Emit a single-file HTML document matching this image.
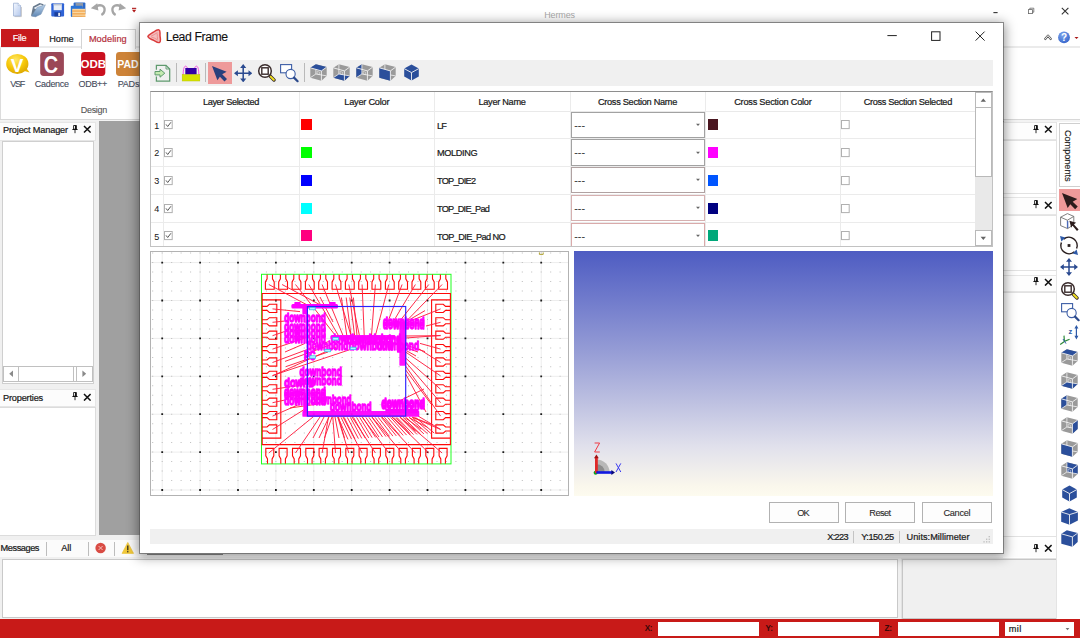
<!DOCTYPE html>
<html><head><meta charset="utf-8"><title>Hermes</title>
<style>
html,body{margin:0;padding:0;background:#fff;}
body{width:1080px;height:638px;position:relative;overflow:hidden;font-family:"Liberation Sans",sans-serif;}
body div,body svg{position:absolute;}
svg svg{position:static;}
</style></head><body>
<svg style="left:0;top:0" width="140" height="22" viewBox="0 0 140 22">
<defs><linearGradient id="gpg" x1="0" y1="0" x2="1" y2="1"><stop offset="0" stop-color="#f4f8ff"/><stop offset="1" stop-color="#b4c8ec"/></linearGradient>
<linearGradient id="gfd" x1="0" y1="0" x2="0" y2="1"><stop offset="0" stop-color="#b8d0e8"/><stop offset="1" stop-color="#5e86b4"/></linearGradient></defs>
<path d="M14.6 16.6 H21.4 V7" fill="none" stroke="#c9c9c9" stroke-width="1"/><path d="M13.5 3.2 H18.2 L20.6 5.6 V16 H13.5 Z" fill="url(#gpg)" stroke="#9fb2d4" stroke-width="0.8"/>
<path d="M18.2 3.2 V5.6 H20.6" fill="#fff" stroke="#9fb2d4" stroke-width="0.6"/>
<path d="M31 15.8 L33 6.6 L39.6 3 L43.6 4.2 L42.4 7 L36 16.4 Z" fill="#66788c"/>
<path d="M33.6 8 L40.4 4.4 L43 5.2 L36.4 9.4 Z" fill="#eef3f8"/>
<path d="M31.6 16.2 L37 7.4 L45.4 4.8 L41 14.2 L35.6 16.8 Z" fill="url(#gfd)" stroke="#7892b0" stroke-width="0.5"/>
<rect x="51.3" y="3.3" width="12.8" height="13.2" rx="1" fill="#2f63d6"/><rect x="53.6" y="3.8" width="8.2" height="6.4" fill="#e9eef6"/><rect x="53.6" y="3.8" width="8.2" height="1.6" fill="#b9c3d2"/><rect x="54.4" y="12.2" width="6.6" height="4.3" fill="#1b3f9c"/><rect x="58.2" y="12.8" width="1.9" height="3.2" fill="#e6ecf7"/>
<rect x="73.6" y="2.6" width="11.8" height="11.6" rx="1" fill="#2d69c8"/><rect x="75.6" y="3" width="7.4" height="4.6" fill="#8d98a8"/><rect x="70.8" y="5.8" width="11.8" height="11.2" rx="1" fill="#2a73d6"/><rect x="72.2" y="8.8" width="13.2" height="8" fill="#f9d6a0"/><rect x="72.2" y="10.4" width="13.2" height="1.3" fill="#f2a64e"/><rect x="72.2" y="13.2" width="13.2" height="1.3" fill="#f2a64e"/><rect x="72.2" y="15.8" width="13.2" height="1" fill="#f2a64e"/>
<path d="M96.2 6.4 C101 3.6 105 6.4 104.6 10.2 C104.4 12.6 103 14.2 101.4 15" fill="none" stroke="#a6a6a6" stroke-width="2.3"/><path d="M90.8 8.2 L97.2 3.2 L98.4 10.4 Z" fill="#a6a6a6"/>
<path d="M120.8 6.4 C116 3.6 112 6.4 112.4 10.2 C112.6 12.6 114 14.2 115.6 15" fill="none" stroke="#a6a6a6" stroke-width="2.3"/><path d="M126.2 8.2 L119.8 3.2 L118.6 10.4 Z" fill="#a6a6a6"/>
<rect x="132" y="7.8" width="4.2" height="1.1" fill="#b01818"/><path d="M132 9.8 H136.2 L134.1 12.4 Z" fill="#b01818"/>
</svg>
<div style="top:8.80px;line-height:12px;font-size:9.0px;color:#a8a8a8;white-space:nowrap;letter-spacing:-0.134px;left:559.53px;transform:translateX(-50%);">Hermes</div>
<svg style="left:985px;top:0" width="95" height="22" viewBox="985 0 95 22"><path d="M993.4 12.6 H997.6" stroke="#333" stroke-width="1.1"/><rect x="1028.4" y="9.6" width="4" height="4" fill="#fff" stroke="#666" stroke-width="0.8"/><path d="M1029.8 9.6 V8.2 H1033.8 V12.2 H1032.4" fill="none" stroke="#666" stroke-width="0.8"/><path d="M1061.8 7.8 L1068.4 14.4 M1068.4 7.8 L1061.8 14.4" stroke="#333" stroke-width="1.1"/></svg>
<div style="left:0px;top:46px;width:1080px;height:2px;background:#ebebeb"></div>
<div style="left:1px;top:29px;width:38px;height:17.5px;background:#c7191c"></div>
<div style="top:32.30px;line-height:12px;font-size:9.2px;color:#fff;white-space:nowrap;-webkit-text-stroke:0.15px #fff;letter-spacing:-0.381px;left:19.51px;transform:translateX(-50%);">File</div>
<div style="top:32.70px;line-height:12px;font-size:9.2px;color:#222;white-space:nowrap;-webkit-text-stroke:0.22px #222;letter-spacing:-0.010px;left:61.49px;transform:translateX(-50%);">Home</div>
<div style="left:81px;top:29px;width:52.5px;height:19px;background:#fff;border:1px solid #d4d4d4;border-bottom:none"></div>
<div style="top:32.70px;line-height:12px;font-size:9.2px;color:#b5323e;white-space:nowrap;-webkit-text-stroke:0.22px #b5323e;letter-spacing:0.070px;left:107.84px;transform:translateX(-50%);">Modeling</div>
<svg style="left:1040px;top:28px" width="40" height="20" viewBox="1040 28 40 20"><path d="M1045.2 39 L1048 35.6 L1050.8 39" fill="none" stroke="#5a5a5a" stroke-width="2.2" stroke-linecap="round" stroke-linejoin="round"/><path d="M1045.2 39 L1048 35.6 L1050.8 39" fill="none" stroke="#fff" stroke-width="0.9" stroke-linecap="round" stroke-linejoin="round"/>
<defs><radialGradient id="ghl" cx="0.4" cy="0.3" r="0.8"><stop offset="0" stop-color="#7ea6ee"/><stop offset="1" stop-color="#2f5fc8"/></radialGradient></defs>
<circle cx="1064" cy="37.4" r="5.9" fill="url(#ghl)"/><text x="1064" y="41" font-family="Liberation Sans" font-weight="bold" font-size="10" fill="#fff" text-anchor="middle">?</text>
<path d="M1074.5 36.9 H1078.5 L1076.5 39 Z" fill="#a81414"/></svg>
<div style="left:0px;top:48px;width:1px;height:71px;background:#dcdcdc"></div>
<svg style="left:0;top:50px" width="140" height="28" viewBox="0 50 140 28">
<defs><radialGradient id="gv" cx="0.42" cy="0.3" r="0.75"><stop offset="0" stop-color="#ffe868"/><stop offset="0.55" stop-color="#f6c708"/><stop offset="1" stop-color="#d9a300"/></radialGradient></defs>
<path d="M21 70 L29.6 72.6 L24.8 66 Z" fill="#ecb800"/><ellipse cx="17.3" cy="63.9" rx="11.1" ry="10" fill="url(#gv)"/>
<text x="10.7" y="71.6" font-family="Liberation Sans" font-weight="bold" font-size="19.2" fill="#fff" textLength="12.6" lengthAdjust="spacingAndGlyphs">V</text>
<rect x="40.2" y="52" width="23.7" height="24" rx="3.4" fill="#9b4757"/><text x="43.7" y="72.7" font-family="Liberation Sans" font-weight="bold" font-size="24.2" fill="#fff" textLength="14.3" lengthAdjust="spacingAndGlyphs">C</text>
<rect x="81.1" y="52" width="24.2" height="24" rx="3.4" fill="#ca0f1e"/>
<svg x="81.1" y="52" width="24.2" height="24" viewBox="81.1 52 24.2 24"><text x="80.5" y="68.1" font-family="Liberation Sans" font-weight="bold" font-size="10.9" fill="#fff" textLength="25.7" lengthAdjust="spacingAndGlyphs">ODB</text></svg>
<rect x="116" y="52" width="28" height="24" rx="3.4" fill="#cd8338"/><text x="117.3" y="67.9" font-family="Liberation Sans" font-weight="bold" font-size="10.5" fill="#fff">PAD</text>
</svg>
<div style="top:77.90px;line-height:12px;font-size:9.0px;color:#444a5a;white-space:nowrap;-webkit-text-stroke:0.1px #444a5a;letter-spacing:-1.301px;left:17.15px;transform:translateX(-50%);">VSF</div>
<div style="top:77.90px;line-height:12px;font-size:9.0px;color:#444a5a;white-space:nowrap;-webkit-text-stroke:0.1px #444a5a;letter-spacing:-0.332px;left:51.73px;transform:translateX(-50%);">Cadence</div>
<div style="top:77.90px;line-height:12px;font-size:9.0px;color:#444a5a;white-space:nowrap;-webkit-text-stroke:0.1px #444a5a;letter-spacing:-0.363px;left:92.72px;transform:translateX(-50%);">ODB++</div>
<div style="top:77.90px;line-height:12px;font-size:9.0px;color:#444a5a;white-space:nowrap;-webkit-text-stroke:0.1px #444a5a;letter-spacing:-0.210px;left:117.7px;">PADs</div>
<div style="top:103.90px;line-height:12px;font-size:9.0px;color:#555;white-space:nowrap;-webkit-text-stroke:0.1px #555;letter-spacing:-0.336px;left:93.83px;transform:translateX(-50%);">Design</div>
<div style="left:0px;top:119px;width:1080px;height:1px;background:#d8d8d8"></div>
<div style="left:0px;top:120px;width:1080px;height:1.5px;background:#f3f3f3"></div>
<div style="left:0px;top:121px;width:99px;height:419px;background:#f0f0f0"></div>
<div style="left:99px;top:121px;width:905px;height:414px;background:#a0a0a0"></div>
<div style="left:99px;top:535px;width:905px;height:5px;background:#f0f0f0"></div>
<div style="left:0px;top:121.5px;width:95px;height:17.5px;background:#fcfcfc;border:1px solid #e6e6e6;border-left:none"></div>
<div style="top:124.30px;line-height:12px;font-size:9.2px;color:#1a1a1a;white-space:nowrap;-webkit-text-stroke:0.22px #1a1a1a;letter-spacing:-0.167px;left:3px;">Project Manager</div>
<svg style="left:72px;top:125.0px" width="6" height="9" viewBox="0 0 6 9"><path d="M1.6 0.5 H4.4 V4.2 H1.6 Z" fill="none" stroke="#111" stroke-width="0.9"/><path d="M3.6 0.5 V4.2" stroke="#111" stroke-width="1.2"/><path d="M0.4 4.5 H5.6" stroke="#111" stroke-width="1"/><path d="M3 4.6 V8.2" stroke="#111" stroke-width="0.9"/></svg>
<svg style="left:82.7px;top:125.3px" width="8.6" height="8.6" viewBox="-4.3 -4.3 8.6 8.6"><path d="M-3.3 -3.3 L3.3 3.3 M3.3 -3.3 L-3.3 3.3" stroke="#111" stroke-width="1.5"/></svg>
<div style="left:1.6px;top:140.5px;width:90.6px;height:241px;background:#fff;border:1px solid #cfcfcf"></div>
<div style="left:3.2px;top:366px;width:87.6px;height:14.4px;background:#fff;border:1px solid #c0c0c0"></div>
<div style="left:18px;top:366px;width:1.2px;height:15.5px;background:#c0c0c0"></div>
<div style="left:73px;top:366px;width:1.2px;height:15.5px;background:#c0c0c0"></div>
<div style="left:76px;top:366px;width:1.2px;height:15.5px;background:#c0c0c0"></div>
<svg style="left:3px;top:366px" width="91" height="16" viewBox="3 366 91 16"><path d="M13 370.6 V377 L9.2 373.8 Z M82.4 370.6 V377 L86.2 373.8 Z" fill="#8a8a8a"/></svg>
<div style="left:0px;top:389px;width:95px;height:16px;background:#fcfcfc;border:1px solid #e6e6e6;border-left:none"></div>
<div style="top:391.50px;line-height:12px;font-size:9.2px;color:#1a1a1a;white-space:nowrap;-webkit-text-stroke:0.22px #1a1a1a;letter-spacing:-0.193px;left:3px;">Properties</div>
<svg style="left:72px;top:392.0px" width="6" height="9" viewBox="0 0 6 9"><path d="M1.6 0.5 H4.4 V4.2 H1.6 Z" fill="none" stroke="#111" stroke-width="0.9"/><path d="M3.6 0.5 V4.2" stroke="#111" stroke-width="1.2"/><path d="M0.4 4.5 H5.6" stroke="#111" stroke-width="1"/><path d="M3 4.6 V8.2" stroke="#111" stroke-width="0.9"/></svg>
<svg style="left:82.7px;top:392.5px" width="8.6" height="8.6" viewBox="-4.3 -4.3 8.6 8.6"><path d="M-3.3 -3.3 L3.3 3.3 M3.3 -3.3 L-3.3 3.3" stroke="#111" stroke-width="1.5"/></svg>
<div style="left:0px;top:406.5px;width:95px;height:127px;background:#fff;border:1px solid #dcdcdc;border-left:none"></div>
<div style="left:0px;top:540px;width:1056.4px;height:17px;background:#fbfbfb"></div>
<div style="top:542.40px;line-height:12px;font-size:9.2px;color:#1a1a1a;white-space:nowrap;-webkit-text-stroke:0.22px #1a1a1a;letter-spacing:-0.429px;left:0.6px;">Messages</div>
<div style="left:45.6px;top:541.5px;width:1px;height:14px;background:#bdbdbd"></div>
<div style="left:88px;top:541.5px;width:1px;height:14px;background:#bdbdbd"></div>
<div style="left:114.2px;top:541.5px;width:1px;height:14px;background:#bdbdbd"></div>
<div style="top:542.40px;line-height:12px;font-size:9.2px;color:#1a1a1a;white-space:nowrap;-webkit-text-stroke:0.22px #1a1a1a;letter-spacing:-0.008px;left:66.30px;transform:translateX(-50%);">All</div>
<svg style="left:94px;top:541px" width="44" height="15" viewBox="94 541 44 15"><circle cx="100.6" cy="548" r="5.2" fill="#d94c44"/><path d="M98.6 546 L102.6 550 M102.6 546 L98.6 550" stroke="#f7c8c4" stroke-width="0.9"/><path d="M127.8 542.4 L133.6 553.4 H122 Z" fill="#f2c93a" stroke="#e8bd2e" stroke-width="0.6" stroke-linejoin="round"/><path d="M127.8 545.6 V550.2" stroke="#222" stroke-width="1.2"/><circle cx="127.8" cy="551.8" r="0.7" fill="#222"/></svg>
<div style="left:0px;top:557px;width:1056.4px;height:62px;background:#f0f0f0"></div>
<div style="left:1.5px;top:558.8px;width:894px;height:57px;background:#fff;border:1px solid #c9c9c9"></div>
<div style="left:902px;top:559px;width:152.5px;height:58.4px;background:#f0f0f0;border:1px solid #c6c6c6"></div>
<div style="left:900.5px;top:557.8px;width:155.5px;height:60.8px;border:1px solid #e2e2e2;background:none"></div>
<div style="left:147px;top:554.2px;width:76px;height:1.3px;background:#8c8c8c"></div>
<div style="left:0px;top:619px;width:1080px;height:19px;background:#c81a18"></div>
<div style="top:623.30px;line-height:12px;font-size:8.2px;color:#3a0808;white-space:nowrap;font-weight:bold;letter-spacing:-0.600px;left:644.8px;">X:</div>
<div style="left:658px;top:622px;width:101.2px;height:14.3px;background:#fff"></div>
<div style="top:623.30px;line-height:12px;font-size:8.2px;color:#3a0808;white-space:nowrap;font-weight:bold;letter-spacing:-0.296px;left:765.6px;">Y:</div>
<div style="left:778px;top:622px;width:100.8px;height:14.3px;background:#fff"></div>
<div style="top:623.30px;line-height:12px;font-size:8.2px;color:#3a0808;white-space:nowrap;font-weight:bold;letter-spacing:-0.370px;left:884.6px;">Z:</div>
<div style="left:897.6px;top:622px;width:101.4px;height:14.3px;background:#fff"></div>
<div style="left:1005px;top:622px;width:69.4px;height:14.3px;background:#fff"></div>
<div style="top:623.30px;line-height:12px;font-size:9.2px;color:#1a1a1a;white-space:nowrap;-webkit-text-stroke:0.22px #1a1a1a;letter-spacing:0.416px;left:1008.8px;">mil</div>
<svg style="left:1062px;top:625px" width="10" height="8" viewBox="0 0 10 8"><path d="M3.6 3 H7.4 L5.5 5.2 Z" fill="#777"/></svg>
<div style="left:1003px;top:121.5px;width:53.5px;height:436px;background:#fff"></div>
<div style="left:1056.4px;top:121.5px;width:1px;height:497.5px;background:#e4e4e4"></div>
<div style="left:1057.4px;top:121.5px;width:22.6px;height:497.5px;background:#fff"></div>
<div style="left:1003px;top:121.6px;width:53.4px;height:16px;background:#fdfdfd;border-top:1px solid #e6e6e6;border-bottom:1px solid #e6e6e6"></div>
<svg style="left:1033.4px;top:124.6px" width="6" height="9" viewBox="0 0 6 9"><path d="M1.6 0.5 H4.4 V4.2 H1.6 Z" fill="none" stroke="#111" stroke-width="0.9"/><path d="M3.6 0.5 V4.2" stroke="#111" stroke-width="1.2"/><path d="M0.4 4.5 H5.6" stroke="#111" stroke-width="1"/><path d="M3 4.6 V8.2" stroke="#111" stroke-width="0.9"/></svg>
<svg style="left:1044.1000000000001px;top:125.10000000000001px" width="8.6" height="8.6" viewBox="-4.3 -4.3 8.6 8.6"><path d="M-3.3 -3.3 L3.3 3.3 M3.3 -3.3 L-3.3 3.3" stroke="#111" stroke-width="1.5"/></svg>
<div style="left:1003px;top:139.5px;width:52.8px;height:52.5px;background:#fff;border:1px solid #e2e2e2;border-left:none"></div>
<div style="left:1003px;top:197px;width:53.4px;height:16px;background:#fdfdfd;border-top:1px solid #e6e6e6;border-bottom:1px solid #e6e6e6"></div>
<svg style="left:1033.4px;top:200.0px" width="6" height="9" viewBox="0 0 6 9"><path d="M1.6 0.5 H4.4 V4.2 H1.6 Z" fill="none" stroke="#111" stroke-width="0.9"/><path d="M3.6 0.5 V4.2" stroke="#111" stroke-width="1.2"/><path d="M0.4 4.5 H5.6" stroke="#111" stroke-width="1"/><path d="M3 4.6 V8.2" stroke="#111" stroke-width="0.9"/></svg>
<svg style="left:1044.1000000000001px;top:200.5px" width="8.6" height="8.6" viewBox="-4.3 -4.3 8.6 8.6"><path d="M-3.3 -3.3 L3.3 3.3 M3.3 -3.3 L-3.3 3.3" stroke="#111" stroke-width="1.5"/></svg>
<div style="left:1003px;top:214.5px;width:52.8px;height:54px;background:#fff;border:1px solid #e2e2e2;border-left:none"></div>
<div style="left:1003px;top:274.6px;width:53.4px;height:15px;background:#fdfdfd;border-top:1px solid #e6e6e6;border-bottom:1px solid #e6e6e6"></div>
<svg style="left:1033.4px;top:277.1px" width="6" height="9" viewBox="0 0 6 9"><path d="M1.6 0.5 H4.4 V4.2 H1.6 Z" fill="none" stroke="#111" stroke-width="0.9"/><path d="M3.6 0.5 V4.2" stroke="#111" stroke-width="1.2"/><path d="M0.4 4.5 H5.6" stroke="#111" stroke-width="1"/><path d="M3 4.6 V8.2" stroke="#111" stroke-width="0.9"/></svg>
<svg style="left:1044.1000000000001px;top:277.6px" width="8.6" height="8.6" viewBox="-4.3 -4.3 8.6 8.6"><path d="M-3.3 -3.3 L3.3 3.3 M3.3 -3.3 L-3.3 3.3" stroke="#111" stroke-width="1.5"/></svg>
<div style="left:1003px;top:291.5px;width:52.8px;height:243.5px;background:#fff;border:1px solid #e2e2e2;border-left:none"></div>
<div style="left:1003px;top:540px;width:53.4px;height:16.5px;background:#fdfdfd"></div>
<svg style="left:1032.6px;top:543.5px" width="6" height="9" viewBox="0 0 6 9"><path d="M1.6 0.5 H4.4 V4.2 H1.6 Z" fill="none" stroke="#111" stroke-width="0.9"/><path d="M3.6 0.5 V4.2" stroke="#111" stroke-width="1.2"/><path d="M0.4 4.5 H5.6" stroke="#111" stroke-width="1"/><path d="M3 4.6 V8.2" stroke="#111" stroke-width="0.9"/></svg>
<svg style="left:1043.9px;top:543.9000000000001px" width="8.6" height="8.6" viewBox="-4.3 -4.3 8.6 8.6"><path d="M-3.3 -3.3 L3.3 3.3 M3.3 -3.3 L-3.3 3.3" stroke="#111" stroke-width="1.5"/></svg>
<div style="left:1059.3px;top:123px;width:22px;height:62.4px;background:#fff;border:1px solid #cfcfcf"></div>
<div style="left:1068.4px;top:130px;width:0;height:0;"><div style="position:absolute;left:0;top:0;transform-origin:0 0;transform:rotate(90deg) translate(0,-6px);font-size:9.2px;line-height:12px;color:#1a1a1a;white-space:nowrap;letter-spacing:-0.06px;-webkit-text-stroke:0.15px #1a1a1a">Components</div></div>
<div style="left:1058.7px;top:189.4px;width:21.3px;height:21.7px;background:#ee9a9a"></div>
<svg style="left:1062px;top:193px" width="18.900000000000002" height="18.900000000000002" viewBox="0 0 18 18"><path d="M0 0 L14.6 5.7 L10.2 8.3 L15 12.9 L12.5 15.4 L7.9 10.7 L5.4 14.3 Z" fill="#2b1c1c"/></svg>
<svg style="left:1059px;top:212px" width="21" height="22" viewBox="0 0 21 22"><path d="M1.6 5.2 L8.4 1.6 L14.8 4.4 L14.8 12.6 L8.6 16.6 L1.6 13.6 Z" fill="#fff" stroke="#707070" stroke-width="0.9"/><path d="M1.6 5.2 L8.4 8.2 L14.8 4.4 M8.4 8.2 L8.6 16.6" fill="none" stroke="#707070" stroke-width="0.9"/><path d="M8.6 9 V16" stroke="#4a6ab8" stroke-width="1.4"/><path d="M10.4 8.8 L17.2 10.8 L14.8 12.2 L19.6 17.6 L18 19 L13.4 13.6 L12.2 15.8 Z" fill="#2b1c1c"/></svg>
<svg style="left:1058px;top:234px" width="22" height="23" viewBox="-11 -11.5 22 23"><path d="M-5.4 -6.2 A8.2 8.2 0 0 1 7.6 3" fill="none" stroke="#2b2020" stroke-width="1.5"/><path d="M5.4 6.2 A8.2 8.2 0 0 1 -7.6 -3" fill="none" stroke="#2b2020" stroke-width="1.5"/><path d="M-9 -9.6 L-3.6 -8 L-7.6 -4 Z" fill="#2e5aa8"/><path d="M9 9.6 L3.6 8 L7.6 4 Z" fill="#2e5aa8"/><rect x="-1.4" y="-1.4" width="2.8" height="2.8" fill="#2b2020"/></svg>
<svg style="left:1060.2px;top:258.4px" width="18" height="18" viewBox="-9 -9 18 18"><path d="M-6 0 H6 M0 -6 V6" stroke="#2a4a90" stroke-width="1.5"/><path d="M0 -9 L3 -5.2 H-3 Z M0 9 L3 5.2 H-3 Z M-9 0 L-5.2 -3 V3 Z M9 0 L5.2 -3 V3 Z" fill="#2a4a90"/></svg>
<svg style="left:1058.6px;top:279.6px" width="20" height="20" viewBox="-9 -9 20 20"><path d="M4.8 4.8 L9 9" stroke="#3a2c2c" stroke-width="3.4" stroke-linecap="round"/><path d="M5.6 5.6 L8.8 8.8" stroke="#f0e020" stroke-width="2" stroke-linecap="round"/><circle cx="0" cy="0" r="6.3" fill="#fff" stroke="#3a2c2c" stroke-width="1.5"/><rect x="-3.2" y="-3.2" width="6.4" height="6.4" fill="#fff" stroke="#3a2c2c" stroke-width="1.4"/></svg>
<svg style="left:1060.6px;top:303.4px" width="20" height="19" viewBox="0 0 20 19"><rect x="0.6" y="0.6" width="11" height="8.2" fill="#fff" stroke="#3d5ea6" stroke-width="1.1"/><circle cx="10.6" cy="10" r="4.6" fill="#fff" stroke="#3d5ea6" stroke-width="1.1"/><path d="M14 13.6 L17.6 17.2" stroke="#2c4a8c" stroke-width="2.2" stroke-linecap="round"/></svg>
<svg style="left:1059px;top:324px" width="21" height="23" viewBox="0 0 21 23"><path d="M5.4 17.4 L10.6 15.2 M5.4 17.4 L5 11.6 M5.4 17.4 L1.2 20.4" stroke="#2e8a3a" stroke-width="1.2" fill="none"/><path d="M4 15 L7 19.6" stroke="#2e5aa8" stroke-width="1"/><text x="9.4" y="9.6" font-family="Liberation Sans" font-weight="bold" font-size="7.5" fill="#2e5aa8">z</text><path d="M17.4 3.6 V13" stroke="#2e5aa8" stroke-width="1.2"/><path d="M17.4 1 L19.4 4.6 H15.4 Z M17.4 15.4 L19.4 11.8 H15.4 Z" fill="#2e5aa8"/></svg>
<svg style="left:1061px;top:349.4px" width="17" height="17" viewBox="0 0 17 17"><polygon points="0.3,3.8 5.9,0.2 16.7,3.1 16.7,11.9 11.4,16.8 0.3,13.7" fill="#9a9a9a"/><path d="M5.9 10.0 L5.9 0.2 M5.9 10.0 L0.3 13.7 M5.9 10.0 L16.7 11.9" stroke="#f4f4f4" stroke-width="0.8" fill="none"/><path d="M7.2 7.4 L9.6 8.2 L9.6 10.6 L7.2 9.8 Z" stroke="#f4f4f4" stroke-width="0.6" fill="none" opacity="0.8"/><polygon points="0.3,3.8 5.9,0.2 16.7,3.1 11.4,6.9" fill="#2b4f9b"/><path d="M11.4 6.9 L11.4 16.8 M11.4 6.9 L0.3 3.8 M11.4 6.9 L16.7 3.1" stroke="#f4f4f4" stroke-width="0.9" fill="none"/></svg>
<svg style="left:1061px;top:372px" width="17" height="17" viewBox="0 0 17 17"><polygon points="0.3,3.8 5.9,0.2 16.7,3.1 16.7,11.9 11.4,16.8 0.3,13.7" fill="#9a9a9a"/><polygon points="0.3,13.7 5.9,10.0 16.7,11.9 11.4,16.8" fill="#2b4f9b"/><path d="M5.9 10.0 L5.9 0.2 M5.9 10.0 L0.3 13.7 M5.9 10.0 L16.7 11.9" stroke="#f4f4f4" stroke-width="0.8" fill="none"/><path d="M7.2 7.4 L9.6 8.2 L9.6 10.6 L7.2 9.8 Z" stroke="#f4f4f4" stroke-width="0.6" fill="none" opacity="0.8"/><path d="M11.4 6.9 L11.4 16.8 M11.4 6.9 L0.3 3.8 M11.4 6.9 L16.7 3.1" stroke="#f4f4f4" stroke-width="0.9" fill="none"/></svg>
<svg style="left:1061px;top:394.6px" width="17" height="17" viewBox="0 0 17 17"><polygon points="0.3,3.8 5.9,0.2 16.7,3.1 16.7,11.9 11.4,16.8 0.3,13.7" fill="#9a9a9a"/><polygon points="0.3,3.8 5.9,0.2 5.9,10.0 0.3,13.7" fill="#2b4f9b"/><path d="M5.9 10.0 L5.9 0.2 M5.9 10.0 L0.3 13.7 M5.9 10.0 L16.7 11.9" stroke="#f4f4f4" stroke-width="0.8" fill="none"/><path d="M7.2 7.4 L9.6 8.2 L9.6 10.6 L7.2 9.8 Z" stroke="#f4f4f4" stroke-width="0.6" fill="none" opacity="0.8"/><path d="M11.4 6.9 L11.4 16.8 M11.4 6.9 L0.3 3.8 M11.4 6.9 L16.7 3.1" stroke="#f4f4f4" stroke-width="0.9" fill="none"/></svg>
<svg style="left:1061px;top:417.2px" width="17" height="17" viewBox="0 0 17 17"><polygon points="0.3,3.8 5.9,0.2 16.7,3.1 16.7,11.9 11.4,16.8 0.3,13.7" fill="#9a9a9a"/><path d="M5.9 10.0 L5.9 0.2 M5.9 10.0 L0.3 13.7 M5.9 10.0 L16.7 11.9" stroke="#f4f4f4" stroke-width="0.8" fill="none"/><path d="M7.2 7.4 L9.6 8.2 L9.6 10.6 L7.2 9.8 Z" stroke="#f4f4f4" stroke-width="0.6" fill="none" opacity="0.8"/><polygon points="11.4,6.9 16.7,3.1 16.7,11.9 11.4,16.8" fill="#2b4f9b"/><path d="M11.4 6.9 L11.4 16.8 M11.4 6.9 L0.3 3.8 M11.4 6.9 L16.7 3.1" stroke="#f4f4f4" stroke-width="0.9" fill="none"/></svg>
<svg style="left:1061px;top:439.6px" width="17" height="17" viewBox="0 0 17 17"><polygon points="0.3,3.8 5.9,0.2 16.7,3.1 16.7,11.9 11.4,16.8 0.3,13.7" fill="#9a9a9a"/><path d="M5.9 10.0 L5.9 0.2 M5.9 10.0 L0.3 13.7 M5.9 10.0 L16.7 11.9" stroke="#f4f4f4" stroke-width="0.8" fill="none"/><path d="M7.2 7.4 L9.6 8.2 L9.6 10.6 L7.2 9.8 Z" stroke="#f4f4f4" stroke-width="0.6" fill="none" opacity="0.8"/><polygon points="0.3,3.8 11.4,6.9 11.4,16.8 0.3,13.7" fill="#2b4f9b"/><path d="M11.4 6.9 L11.4 16.8 M11.4 6.9 L0.3 3.8 M11.4 6.9 L16.7 3.1" stroke="#f4f4f4" stroke-width="0.9" fill="none"/></svg>
<svg style="left:1061px;top:462.2px" width="17" height="17" viewBox="0 0 17 17"><polygon points="0.3,3.8 5.9,0.2 16.7,3.1 16.7,11.9 11.4,16.8 0.3,13.7" fill="#9a9a9a"/><polygon points="5.9,0.2 16.7,3.1 16.7,11.9 5.9,10.0" fill="#2b4f9b"/><path d="M5.9 10.0 L5.9 0.2 M5.9 10.0 L0.3 13.7 M5.9 10.0 L16.7 11.9" stroke="#f4f4f4" stroke-width="0.8" fill="none"/><path d="M7.2 7.4 L9.6 8.2 L9.6 10.6 L7.2 9.8 Z" stroke="#f4f4f4" stroke-width="0.6" fill="none" opacity="0.8"/><path d="M11.4 6.9 L11.4 16.8 M11.4 6.9 L0.3 3.8 M11.4 6.9 L16.7 3.1" stroke="#f4f4f4" stroke-width="0.9" fill="none"/></svg>
<svg style="left:1061px;top:485px" width="17" height="17" viewBox="0 0 17 17"><polygon points="8.5,0.6 15.8,4.6 15.8,12.6 8.5,16.6 1.2,12.6 1.2,4.6" fill="#2b4f9b"/><path d="M8.5 8.6 L8.5 16.6 M8.5 8.6 L1.2 4.6 M8.5 8.6 L15.8 4.6" stroke="#f4f4f4" stroke-width="0.9" fill="none"/></svg>
<svg style="left:1061px;top:507.5px" width="17" height="17" viewBox="0 0 17 17"><polygon points="8.3,0.3 16.9,4.0 16.9,12.5 8.5,16.8 0.2,13.8 0.2,4.0" fill="#2b4f9b"/><path d="M8.5 6.6 L8.5 16.8 M8.5 6.6 L0.2 4.0 M8.5 6.6 L16.9 4.0" stroke="#f4f4f4" stroke-width="0.9" fill="none"/></svg>
<svg style="left:1061px;top:530px" width="17" height="17" viewBox="0 0 17 17"><polygon points="0.3,3.8 5.9,0.2 16.7,3.1 16.7,11.9 11.4,16.8 0.3,13.7" fill="#2b4f9b"/><path d="M11.4 6.9 L11.4 16.8 M11.4 6.9 L0.3 3.8 M11.4 6.9 L16.7 3.1" stroke="#f4f4f4" stroke-width="0.9" fill="none"/></svg>
<div style="left:139.6px;top:22.6px;width:863.2px;height:530.8px;background:#fff;box-shadow:0 0 0 1px rgba(80,80,80,0.6),0 2px 11px 2px rgba(0,0,0,0.42)"></div>
<svg style="left:147px;top:28.5px" width="15" height="15" viewBox="0 0 15 15"><path d="M0.9 7.3 C1.6 5.6 4.4 4.6 6.4 3.2 C8.2 1.9 10.4 0.2 12 0.9 C13.6 1.6 12.8 4.4 13 6.8 C13.2 9.4 14.2 12.4 12.6 13.4 C11 14.4 8.6 12.4 6.6 11.4 C4.4 10.3 1.4 9.4 0.9 7.3 Z" fill="#f4bcbc" stroke="#db3c3c" stroke-width="1.5" stroke-linejoin="round"/><path d="M4 7.2 C6 6.4 8.4 5 10.4 3.6 M4.4 8 C6.6 8.6 9 9.8 10.8 11 M10.2 4.4 C10.2 6.6 10.4 8.6 10.6 10.4" fill="none" stroke="#ea8a8a" stroke-width="0.9"/></svg>
<div style="top:30.50px;line-height:12px;font-size:12.3px;color:#111;white-space:nowrap;-webkit-text-stroke:0.1px #111;letter-spacing:-0.432px;left:165.8px;">Lead Frame</div>
<svg style="left:880px;top:26px" width="112" height="20" viewBox="880 26 112 20"><path d="M887.4 35.6 H896.8" stroke="#222" stroke-width="1"/><rect x="931.6" y="31.8" width="8.4" height="8.6" fill="none" stroke="#222" stroke-width="1"/><path d="M975.6 31.6 L984.6 40.6 M984.6 31.6 L975.6 40.6" stroke="#222" stroke-width="1"/></svg>
<div style="left:150px;top:60px;width:843px;height:25.6px;background:#f0f0f0"></div>
<svg style="left:153px;top:62px" width="20" height="22" viewBox="153 62 20 22"><path d="M156.4 69.8 V65.3 H166 L169.7 69 V81 H156.4 V76.6" fill="none" stroke="#5f9a6e" stroke-width="1.25"/><path d="M166 65.3 V69 H169.7" fill="none" stroke="#5f9a6e" stroke-width="0.9"/><path d="M155 71.5 H160 V69.2 L164.8 73.2 L160 77.2 V74.9 H155 Z" fill="#c4eab0" stroke="#5f9a6e" stroke-width="1"/></svg>
<div style="left:176.4px;top:63px;width:1px;height:19.4px;background:#b9b9b9"></div>
<div style="left:205.0px;top:63px;width:1px;height:19.4px;background:#b9b9b9"></div>
<div style="left:303.9px;top:63px;width:1px;height:19.4px;background:#b9b9b9"></div>
<svg style="left:180px;top:62px" width="22" height="21" viewBox="180 62 22 21"><path d="M183.2 75 C183 66 185.8 64 187.6 68.4 M198.8 75 C199 66 196.2 64 194.4 68.4" fill="none" stroke="#f040e0" stroke-width="0.9"/><rect x="185.3" y="68" width="11.3" height="6.6" fill="#3200a4"/><rect x="182.2" y="74.6" width="17.6" height="6.4" fill="#d6e200" stroke="#b8c400" stroke-width="0.5"/></svg>
<div style="left:208.4px;top:61.8px;width:23.3px;height:22.3px;background:#ee9a9a"></div>
<svg style="left:212.1px;top:66.2px" width="18.0" height="18.0" viewBox="0 0 18 18"><path d="M0 0 L14.6 5.7 L10.2 8.3 L15 12.9 L12.5 15.4 L7.9 10.7 L5.4 14.3 Z" fill="#293f7c"/></svg>
<svg style="left:233.60000000000002px;top:63.599999999999994px" width="18.4" height="18.4" viewBox="-9 -9 18 18"><path d="M-6 0 H6 M0 -6 V6" stroke="#2a4a90" stroke-width="1.5"/><path d="M0 -9 L3 -5.2 H-3 Z M0 9 L3 5.2 H-3 Z M-9 0 L-5.2 -3 V3 Z M9 0 L5.2 -3 V3 Z" fill="#2a4a90"/></svg>
<svg style="left:256px;top:62.400000000000006px" width="20" height="20" viewBox="-9 -9 20 20"><path d="M4.8 4.8 L9 9" stroke="#3a2c2c" stroke-width="3.4" stroke-linecap="round"/><path d="M5.6 5.6 L8.8 8.8" stroke="#f0e020" stroke-width="2" stroke-linecap="round"/><circle cx="0" cy="0" r="6.3" fill="#fff" stroke="#3a2c2c" stroke-width="1.5"/><rect x="-3.2" y="-3.2" width="6.4" height="6.4" fill="#fff" stroke="#3a2c2c" stroke-width="1.4"/></svg>
<svg style="left:280.4px;top:64.2px" width="20" height="19" viewBox="0 0 20 19"><rect x="0.6" y="0.6" width="11" height="8.2" fill="#fff" stroke="#3d5ea6" stroke-width="1.1"/><circle cx="10.6" cy="10" r="4.6" fill="#fff" stroke="#3d5ea6" stroke-width="1.1"/><path d="M14 13.6 L17.6 17.2" stroke="#2c4a8c" stroke-width="2.2" stroke-linecap="round"/></svg>
<svg style="left:309.6px;top:64.2px" width="17" height="17" viewBox="0 0 17 17"><polygon points="0.3,3.8 5.9,0.2 16.7,3.1 16.7,11.9 11.4,16.8 0.3,13.7" fill="#9a9a9a"/><path d="M5.9 10.0 L5.9 0.2 M5.9 10.0 L0.3 13.7 M5.9 10.0 L16.7 11.9" stroke="#f4f4f4" stroke-width="0.8" fill="none"/><path d="M7.2 7.4 L9.6 8.2 L9.6 10.6 L7.2 9.8 Z" stroke="#f4f4f4" stroke-width="0.6" fill="none" opacity="0.8"/><polygon points="0.3,3.8 5.9,0.2 16.7,3.1 11.4,6.9" fill="#2b4f9b"/><path d="M11.4 6.9 L11.4 16.8 M11.4 6.9 L0.3 3.8 M11.4 6.9 L16.7 3.1" stroke="#f4f4f4" stroke-width="0.9" fill="none"/></svg>
<svg style="left:332.8px;top:64.2px" width="17" height="17" viewBox="0 0 17 17"><polygon points="0.3,3.8 5.9,0.2 16.7,3.1 16.7,11.9 11.4,16.8 0.3,13.7" fill="#9a9a9a"/><polygon points="0.3,13.7 5.9,10.0 16.7,11.9 11.4,16.8" fill="#2b4f9b"/><path d="M5.9 10.0 L5.9 0.2 M5.9 10.0 L0.3 13.7 M5.9 10.0 L16.7 11.9" stroke="#f4f4f4" stroke-width="0.8" fill="none"/><path d="M7.2 7.4 L9.6 8.2 L9.6 10.6 L7.2 9.8 Z" stroke="#f4f4f4" stroke-width="0.6" fill="none" opacity="0.8"/><path d="M11.4 6.9 L11.4 16.8 M11.4 6.9 L0.3 3.8 M11.4 6.9 L16.7 3.1" stroke="#f4f4f4" stroke-width="0.9" fill="none"/></svg>
<svg style="left:356.1px;top:64.2px" width="17" height="17" viewBox="0 0 17 17"><polygon points="0.3,3.8 5.9,0.2 16.7,3.1 16.7,11.9 11.4,16.8 0.3,13.7" fill="#9a9a9a"/><polygon points="0.3,3.8 5.9,0.2 5.9,10.0 0.3,13.7" fill="#2b4f9b"/><path d="M5.9 10.0 L5.9 0.2 M5.9 10.0 L0.3 13.7 M5.9 10.0 L16.7 11.9" stroke="#f4f4f4" stroke-width="0.8" fill="none"/><path d="M7.2 7.4 L9.6 8.2 L9.6 10.6 L7.2 9.8 Z" stroke="#f4f4f4" stroke-width="0.6" fill="none" opacity="0.8"/><path d="M11.4 6.9 L11.4 16.8 M11.4 6.9 L0.3 3.8 M11.4 6.9 L16.7 3.1" stroke="#f4f4f4" stroke-width="0.9" fill="none"/></svg>
<svg style="left:379.4px;top:64.2px" width="17" height="17" viewBox="0 0 17 17"><polygon points="0.3,3.8 5.9,0.2 16.7,3.1 16.7,11.9 11.4,16.8 0.3,13.7" fill="#9a9a9a"/><path d="M5.9 10.0 L5.9 0.2 M5.9 10.0 L0.3 13.7 M5.9 10.0 L16.7 11.9" stroke="#f4f4f4" stroke-width="0.8" fill="none"/><path d="M7.2 7.4 L9.6 8.2 L9.6 10.6 L7.2 9.8 Z" stroke="#f4f4f4" stroke-width="0.6" fill="none" opacity="0.8"/><polygon points="0.3,3.8 11.4,6.9 11.4,16.8 0.3,13.7" fill="#2b4f9b"/><path d="M11.4 6.9 L11.4 16.8 M11.4 6.9 L0.3 3.8 M11.4 6.9 L16.7 3.1" stroke="#f4f4f4" stroke-width="0.9" fill="none"/></svg>
<svg style="left:402.8px;top:64.2px" width="17" height="17" viewBox="0 0 17 17"><polygon points="8.5,0.6 15.8,4.6 15.8,12.6 8.5,16.6 1.2,12.6 1.2,4.6" fill="#2b4f9b"/><path d="M8.5 8.6 L8.5 16.6 M8.5 8.6 L1.2 4.6 M8.5 8.6 L15.8 4.6" stroke="#f4f4f4" stroke-width="0.9" fill="none"/></svg>
<div style="left:150px;top:91px;width:842.5px;height:156px;background:#fff;border:1px solid #c2c2c2;border-top-color:#8e8e8e;box-sizing:border-box"></div>
<div style="left:151px;top:110.5px;width:824px;height:1px;background:#e9e9e9"></div>
<div style="left:151px;top:138.2px;width:824px;height:1px;background:#ebebeb"></div>
<div style="left:151px;top:165.9px;width:824px;height:1px;background:#ebebeb"></div>
<div style="left:151px;top:193.7px;width:824px;height:1px;background:#ebebeb"></div>
<div style="left:151px;top:221.5px;width:824px;height:1px;background:#ebebeb"></div>
<div style="left:163.1px;top:92px;width:1px;height:154px;background:#ebebeb"></div>
<div style="left:298.7px;top:92px;width:1px;height:154px;background:#ebebeb"></div>
<div style="left:434.3px;top:92px;width:1px;height:154px;background:#ebebeb"></div>
<div style="left:569.5px;top:92px;width:1px;height:154px;background:#ebebeb"></div>
<div style="left:704.5px;top:92px;width:1px;height:154px;background:#ebebeb"></div>
<div style="left:839.9px;top:92px;width:1px;height:154px;background:#ebebeb"></div>
<div style="top:95.80px;line-height:12px;font-size:9.2px;color:#1a1a1a;white-space:nowrap;-webkit-text-stroke:0.22px #1a1a1a;letter-spacing:-0.384px;left:230.91px;transform:translateX(-50%);">Layer Selected</div>
<div style="top:95.80px;line-height:12px;font-size:9.2px;color:#1a1a1a;white-space:nowrap;-webkit-text-stroke:0.22px #1a1a1a;letter-spacing:-0.232px;left:366.78px;transform:translateX(-50%);">Layer Color</div>
<div style="top:95.80px;line-height:12px;font-size:9.2px;color:#1a1a1a;white-space:nowrap;-webkit-text-stroke:0.22px #1a1a1a;letter-spacing:-0.291px;left:502.05px;transform:translateX(-50%);">Layer Name</div>
<div style="top:95.80px;line-height:12px;font-size:9.2px;color:#1a1a1a;white-space:nowrap;-webkit-text-stroke:0.22px #1a1a1a;letter-spacing:-0.287px;left:637.46px;transform:translateX(-50%);">Cross Section Name</div>
<div style="top:95.80px;line-height:12px;font-size:9.2px;color:#1a1a1a;white-space:nowrap;-webkit-text-stroke:0.22px #1a1a1a;letter-spacing:-0.227px;left:772.89px;transform:translateX(-50%);">Cross Section Color</div>
<div style="top:95.80px;line-height:12px;font-size:9.2px;color:#1a1a1a;white-space:nowrap;-webkit-text-stroke:0.22px #1a1a1a;letter-spacing:-0.333px;left:907.83px;transform:translateX(-50%);">Cross Section Selected</div>
<div style="left:151px;top:92px;width:840.5px;height:154px;overflow:hidden"><div style="top:27.70px;line-height:12px;font-size:9.0px;color:#1a1a1a;white-space:nowrap;-webkit-text-stroke:0.05px #1a1a1a;left:5.70px;transform:translateX(-50%);">1</div><svg style="left:13.099999999999994px;top:28.400000000000006px" width="10" height="10" viewBox="0 0 10 10"><rect x="0.5" y="0.5" width="7.7" height="8.1" fill="#fff" stroke="#b0b0b0" stroke-width="1"/><path d="M2 4.4 L3.7 6.5 L6.9 2.3" fill="none" stroke="#555" stroke-width="1"/></svg><div style="left:150.3px;top:27.30000000000001px;width:11px;height:11px;background:#ff0000"></div><div style="top:27.70px;line-height:12px;font-size:9.2px;color:#1a1a1a;white-space:nowrap;-webkit-text-stroke:0.22px #1a1a1a;letter-spacing:-0.968px;left:286px;">LF</div><div style="left:419.5px;top:19.700000000000003px;width:134px;height:26.2px;background:#fff;border:1px solid #a2a2a2;box-sizing:border-box"></div><div style="top:27.50px;line-height:12px;font-size:9.2px;color:#333;white-space:nowrap;-webkit-text-stroke:0.25px #333;letter-spacing:0.603px;left:423.4px;">---</div><svg style="left:543.5px;top:30.900000000000006px" width="6" height="4" viewBox="0 0 6 4"><path d="M1 0.8 H5 L3 3 Z" fill="#666"/></svg><div style="left:556.8px;top:27.30000000000001px;width:10.6px;height:11px;background:#4a1620"></div><svg style="left:690px;top:28.30000000000001px" width="10" height="10" viewBox="0 0 10 10"><rect x="0.5" y="0.5" width="7.7" height="8.1" fill="#fff" stroke="#b0b0b0" stroke-width="1"/></svg><div style="top:55.40px;line-height:12px;font-size:9.0px;color:#1a1a1a;white-space:nowrap;-webkit-text-stroke:0.05px #1a1a1a;left:5.70px;transform:translateX(-50%);">2</div><svg style="left:13.099999999999994px;top:56.099999999999994px" width="10" height="10" viewBox="0 0 10 10"><rect x="0.5" y="0.5" width="7.7" height="8.1" fill="#fff" stroke="#b0b0b0" stroke-width="1"/><path d="M2 4.4 L3.7 6.5 L6.9 2.3" fill="none" stroke="#555" stroke-width="1"/></svg><div style="left:150.3px;top:55.0px;width:11px;height:11px;background:#00ff00"></div><div style="top:55.40px;line-height:12px;font-size:9.2px;color:#1a1a1a;white-space:nowrap;-webkit-text-stroke:0.22px #1a1a1a;letter-spacing:-0.391px;left:286px;">MOLDING</div><div style="left:419.5px;top:47.39999999999998px;width:134px;height:26.2px;background:#fff;border:1px solid #a2a2a2;box-sizing:border-box"></div><div style="top:55.20px;line-height:12px;font-size:9.2px;color:#333;white-space:nowrap;-webkit-text-stroke:0.25px #333;letter-spacing:0.603px;left:423.4px;">---</div><svg style="left:543.5px;top:58.599999999999994px" width="6" height="4" viewBox="0 0 6 4"><path d="M1 0.8 H5 L3 3 Z" fill="#666"/></svg><div style="left:556.8px;top:55.0px;width:10.6px;height:11px;background:#ff00ff"></div><svg style="left:690px;top:56.0px" width="10" height="10" viewBox="0 0 10 10"><rect x="0.5" y="0.5" width="7.7" height="8.1" fill="#fff" stroke="#b0b0b0" stroke-width="1"/></svg><div style="top:83.10px;line-height:12px;font-size:9.0px;color:#1a1a1a;white-space:nowrap;-webkit-text-stroke:0.05px #1a1a1a;left:5.70px;transform:translateX(-50%);">3</div><svg style="left:13.099999999999994px;top:83.80000000000001px" width="10" height="10" viewBox="0 0 10 10"><rect x="0.5" y="0.5" width="7.7" height="8.1" fill="#fff" stroke="#b0b0b0" stroke-width="1"/><path d="M2 4.4 L3.7 6.5 L6.9 2.3" fill="none" stroke="#555" stroke-width="1"/></svg><div style="left:150.3px;top:82.70000000000002px;width:11px;height:11px;background:#0000ff"></div><div style="top:83.10px;line-height:12px;font-size:9.2px;color:#1a1a1a;white-space:nowrap;-webkit-text-stroke:0.22px #1a1a1a;letter-spacing:-0.752px;left:286px;">TOP_DIE2</div><div style="left:419.5px;top:75.1px;width:134px;height:26.2px;background:#fff;border:1px solid #b0a2a2;box-sizing:border-box"></div><div style="top:82.90px;line-height:12px;font-size:9.2px;color:#333;white-space:nowrap;-webkit-text-stroke:0.25px #333;letter-spacing:0.603px;left:423.4px;">---</div><svg style="left:543.5px;top:86.30000000000001px" width="6" height="4" viewBox="0 0 6 4"><path d="M1 0.8 H5 L3 3 Z" fill="#666"/></svg><div style="left:556.8px;top:82.70000000000002px;width:10.6px;height:11px;background:#0055ff"></div><svg style="left:690px;top:83.70000000000002px" width="10" height="10" viewBox="0 0 10 10"><rect x="0.5" y="0.5" width="7.7" height="8.1" fill="#fff" stroke="#b0b0b0" stroke-width="1"/></svg><div style="top:110.90px;line-height:12px;font-size:9.0px;color:#1a1a1a;white-space:nowrap;-webkit-text-stroke:0.05px #1a1a1a;left:5.70px;transform:translateX(-50%);">4</div><svg style="left:13.099999999999994px;top:111.6px" width="10" height="10" viewBox="0 0 10 10"><rect x="0.5" y="0.5" width="7.7" height="8.1" fill="#fff" stroke="#b0b0b0" stroke-width="1"/><path d="M2 4.4 L3.7 6.5 L6.9 2.3" fill="none" stroke="#555" stroke-width="1"/></svg><div style="left:150.3px;top:110.5px;width:11px;height:11px;background:#00ffff"></div><div style="top:110.90px;line-height:12px;font-size:9.2px;color:#1a1a1a;white-space:nowrap;-webkit-text-stroke:0.22px #1a1a1a;letter-spacing:-0.772px;left:286px;">TOP_DIE_Pad</div><div style="left:419.5px;top:102.89999999999998px;width:134px;height:26.2px;background:#fff;border:1px solid #d6b0b0;box-sizing:border-box"></div><div style="top:110.70px;line-height:12px;font-size:9.2px;color:#333;white-space:nowrap;-webkit-text-stroke:0.25px #333;letter-spacing:0.603px;left:423.4px;">---</div><svg style="left:543.5px;top:114.1px" width="6" height="4" viewBox="0 0 6 4"><path d="M1 0.8 H5 L3 3 Z" fill="#666"/></svg><div style="left:556.8px;top:110.5px;width:10.6px;height:11px;background:#000080"></div><svg style="left:690px;top:111.5px" width="10" height="10" viewBox="0 0 10 10"><rect x="0.5" y="0.5" width="7.7" height="8.1" fill="#fff" stroke="#b0b0b0" stroke-width="1"/></svg><div style="top:138.70px;line-height:12px;font-size:9.0px;color:#1a1a1a;white-space:nowrap;-webkit-text-stroke:0.05px #1a1a1a;left:5.70px;transform:translateX(-50%);">5</div><svg style="left:13.099999999999994px;top:139.4px" width="10" height="10" viewBox="0 0 10 10"><rect x="0.5" y="0.5" width="7.7" height="8.1" fill="#fff" stroke="#b0b0b0" stroke-width="1"/><path d="M2 4.4 L3.7 6.5 L6.9 2.3" fill="none" stroke="#555" stroke-width="1"/></svg><div style="left:150.3px;top:138.3px;width:11px;height:11px;background:#ff007f"></div><div style="top:138.70px;line-height:12px;font-size:9.2px;color:#1a1a1a;white-space:nowrap;-webkit-text-stroke:0.22px #1a1a1a;letter-spacing:-0.646px;left:286px;">TOP_DIE_Pad NO</div><div style="left:419.5px;top:130.7px;width:134px;height:26.2px;background:#fff;border:1px solid #daaaaa;box-sizing:border-box"></div><div style="top:138.50px;line-height:12px;font-size:9.2px;color:#333;white-space:nowrap;-webkit-text-stroke:0.25px #333;letter-spacing:0.603px;left:423.4px;">---</div><svg style="left:543.5px;top:141.9px" width="6" height="4" viewBox="0 0 6 4"><path d="M1 0.8 H5 L3 3 Z" fill="#666"/></svg><div style="left:556.8px;top:138.3px;width:10.6px;height:11px;background:#00a87a"></div><svg style="left:690px;top:139.3px" width="10" height="10" viewBox="0 0 10 10"><rect x="0.5" y="0.5" width="7.7" height="8.1" fill="#fff" stroke="#b0b0b0" stroke-width="1"/></svg></div>
<div style="left:975px;top:92px;width:16.5px;height:154px;background:#e9e9e9"></div>
<div style="left:975px;top:92px;width:16.5px;height:16.4px;background:#fff;border:1px solid #b9b9b9;box-sizing:border-box"></div>
<div style="left:975px;top:108.4px;width:16.5px;height:68.4px;background:#fff;border:1px solid #b9b9b9;border-top:none;box-sizing:border-box"></div>
<div style="left:975px;top:230px;width:16.5px;height:16px;background:#fff;border:1px solid #b9b9b9;box-sizing:border-box"></div>
<svg style="left:975px;top:92px" width="17" height="154" viewBox="975 92 17 154"><path d="M980.6 101.8 H986 L983.3 98.6 Z M980.6 236.8 H986 L983.3 240 Z" fill="#666"/></svg>
<div style="left:574px;top:251px;width:419px;height:244.5px;background:linear-gradient(to bottom,#4e5cc2 0%,#6d78cb 18%,#949bd5 40%,#bec1e1 62%,#e1e1ec 80%,#faf7ec 96%,#fdfbef 100%)"></div>
<svg style="left:585px;top:438px" width="45" height="42" viewBox="585 438 45 42"><path d="M596.6 472.4 V459.4 A13 13 0 0 1 609.6 472.4 Z" fill="#b8b8b8"/><path d="M596.6 472.4 V464.2 A8.2 8.2 0 0 1 604.8 472.4 Z" fill="#8c8c8c"/><circle cx="595.6" cy="472.8" r="2" fill="#10a020"/><rect x="595" y="457.4" width="2.8" height="15.6" fill="#e02828"/><path d="M596.4 454.6 L598.8 458.2 H594 Z" fill="#a01010"/><rect x="596.4" y="471.2" width="15.6" height="2.6" fill="#1018e0"/><path d="M615 472.5 L611.4 470 V475 Z" fill="#080878"/><path d="M594.6 443 H599.6 L594.6 452 H599.8" fill="none" stroke="#f03a44" stroke-width="1"/><path d="M616 463.4 L620.8 472 M620.8 463.4 L616 472" stroke="#3a3af0" stroke-width="1"/></svg>
<div style="left:768.6px;top:502px;width:70px;height:20.6px;background:#fdfdfd;border:1px solid #b2b2b2;box-sizing:border-box"></div>
<div style="top:506.60px;line-height:12px;font-size:9.2px;color:#2a2a2a;white-space:nowrap;-webkit-text-stroke:0.1px #2a2a2a;letter-spacing:-0.996px;left:802.90px;transform:translateX(-50%);">OK</div>
<div style="left:845.2px;top:502px;width:70px;height:20.6px;background:#fdfdfd;border:1px solid #b2b2b2;box-sizing:border-box"></div>
<div style="top:506.60px;line-height:12px;font-size:9.2px;color:#2a2a2a;white-space:nowrap;-webkit-text-stroke:0.1px #2a2a2a;letter-spacing:-0.547px;left:879.93px;transform:translateX(-50%);">Reset</div>
<div style="left:922px;top:502px;width:70px;height:20.6px;background:#fdfdfd;border:1px solid #b2b2b2;box-sizing:border-box"></div>
<div style="top:506.60px;line-height:12px;font-size:9.2px;color:#2a2a2a;white-space:nowrap;-webkit-text-stroke:0.1px #2a2a2a;letter-spacing:-0.340px;left:956.83px;transform:translateX(-50%);">Cancel</div>
<div style="left:150px;top:529px;width:843px;height:15.4px;background:#f0f0f0"></div>
<div style="top:530.90px;line-height:12px;font-size:9.2px;color:#1a1a1a;white-space:nowrap;-webkit-text-stroke:0.22px #1a1a1a;letter-spacing:-0.629px;left:827.2px;">X:223</div>
<div style="left:853.4px;top:531px;width:1px;height:11.6px;background:#c4c4c4"></div>
<div style="top:530.90px;line-height:12px;font-size:9.2px;color:#1a1a1a;white-space:nowrap;-webkit-text-stroke:0.22px #1a1a1a;letter-spacing:-0.466px;left:861.2px;">Y:150.25</div>
<div style="left:899px;top:531px;width:1px;height:11.6px;background:#c4c4c4"></div>
<div style="top:530.90px;line-height:12px;font-size:9.2px;color:#1a1a1a;white-space:nowrap;-webkit-text-stroke:0.22px #1a1a1a;letter-spacing:0.008px;left:906.6px;">Units:Millimeter</div>
<svg style="left:982px;top:535px" width="10" height="9" viewBox="0 0 10 9"><g fill="#bdbdbd"><rect x="6.6" y="1" width="1.3" height="1.3"/><rect x="6.6" y="3.6" width="1.3" height="1.3"/><rect x="4" y="3.6" width="1.3" height="1.3"/><rect x="6.6" y="6.2" width="1.3" height="1.3"/><rect x="4" y="6.2" width="1.3" height="1.3"/><rect x="1.4" y="6.2" width="1.3" height="1.3"/></g></svg>
<svg style="left:150px;top:251px" width="419" height="245" viewBox="150 251 419 245">
<rect x="150.5" y="251.5" width="418" height="244" fill="#fff" stroke="#b2b2b2"/>
<clipPath id="vc"><rect x="151" y="252" width="417" height="243"/></clipPath><g clip-path="url(#vc)">
<path d="M162.2 251 V496 M200.1 251 V496 M238.0 251 V496 M275.9 251 V496 M313.8 251 V496 M351.7 251 V496 M389.6 251 V496 M427.5 251 V496 M465.4 251 V496 M503.3 251 V496 M541.2 251 V496 M150 262.6 H569 M150 300.5 H569 M150 338.4 H569 M150 376.3 H569 M150 414.2 H569 M150 452.1 H569 M150 490.0 H569" stroke="#ededed" stroke-width="1" fill="none"/>
<path d="M152.2 252.6h1v1h-1zM152.2 262.1h1v1h-1zM152.2 271.6h1v1h-1zM152.2 281.1h1v1h-1zM152.2 290.5h1v1h-1zM152.2 300.0h1v1h-1zM152.2 309.5h1v1h-1zM152.2 319.0h1v1h-1zM152.2 328.4h1v1h-1zM152.2 337.9h1v1h-1zM152.2 347.4h1v1h-1zM152.2 356.9h1v1h-1zM152.2 366.3h1v1h-1zM152.2 375.8h1v1h-1zM152.2 385.3h1v1h-1zM152.2 394.8h1v1h-1zM152.2 404.2h1v1h-1zM152.2 413.7h1v1h-1zM152.2 423.2h1v1h-1zM152.2 432.6h1v1h-1zM152.2 442.1h1v1h-1zM152.2 451.6h1v1h-1zM152.2 461.1h1v1h-1zM152.2 470.6h1v1h-1zM152.2 480.0h1v1h-1zM152.2 489.5h1v1h-1zM161.7 252.6h1v1h-1zM161.7 271.6h1v1h-1zM161.7 281.1h1v1h-1zM161.7 290.5h1v1h-1zM161.7 309.5h1v1h-1zM161.7 319.0h1v1h-1zM161.7 328.4h1v1h-1zM161.7 347.4h1v1h-1zM161.7 356.9h1v1h-1zM161.7 366.3h1v1h-1zM161.7 385.3h1v1h-1zM161.7 394.8h1v1h-1zM161.7 404.2h1v1h-1zM161.7 423.2h1v1h-1zM161.7 432.6h1v1h-1zM161.7 442.1h1v1h-1zM161.7 461.1h1v1h-1zM161.7 470.6h1v1h-1zM161.7 480.0h1v1h-1zM171.2 252.6h1v1h-1zM171.2 262.1h1v1h-1zM171.2 271.6h1v1h-1zM171.2 281.1h1v1h-1zM171.2 290.5h1v1h-1zM171.2 300.0h1v1h-1zM171.2 309.5h1v1h-1zM171.2 319.0h1v1h-1zM171.2 328.4h1v1h-1zM171.2 337.9h1v1h-1zM171.2 347.4h1v1h-1zM171.2 356.9h1v1h-1zM171.2 366.3h1v1h-1zM171.2 375.8h1v1h-1zM171.2 385.3h1v1h-1zM171.2 394.8h1v1h-1zM171.2 404.2h1v1h-1zM171.2 413.7h1v1h-1zM171.2 423.2h1v1h-1zM171.2 432.6h1v1h-1zM171.2 442.1h1v1h-1zM171.2 451.6h1v1h-1zM171.2 461.1h1v1h-1zM171.2 470.6h1v1h-1zM171.2 480.0h1v1h-1zM171.2 489.5h1v1h-1zM180.6 252.6h1v1h-1zM180.6 262.1h1v1h-1zM180.6 271.6h1v1h-1zM180.6 281.1h1v1h-1zM180.6 290.5h1v1h-1zM180.6 300.0h1v1h-1zM180.6 309.5h1v1h-1zM180.6 319.0h1v1h-1zM180.6 328.4h1v1h-1zM180.6 337.9h1v1h-1zM180.6 347.4h1v1h-1zM180.6 356.9h1v1h-1zM180.6 366.3h1v1h-1zM180.6 375.8h1v1h-1zM180.6 385.3h1v1h-1zM180.6 394.8h1v1h-1zM180.6 404.2h1v1h-1zM180.6 413.7h1v1h-1zM180.6 423.2h1v1h-1zM180.6 432.6h1v1h-1zM180.6 442.1h1v1h-1zM180.6 451.6h1v1h-1zM180.6 461.1h1v1h-1zM180.6 470.6h1v1h-1zM180.6 480.0h1v1h-1zM180.6 489.5h1v1h-1zM190.1 252.6h1v1h-1zM190.1 262.1h1v1h-1zM190.1 271.6h1v1h-1zM190.1 281.1h1v1h-1zM190.1 290.5h1v1h-1zM190.1 300.0h1v1h-1zM190.1 309.5h1v1h-1zM190.1 319.0h1v1h-1zM190.1 328.4h1v1h-1zM190.1 337.9h1v1h-1zM190.1 347.4h1v1h-1zM190.1 356.9h1v1h-1zM190.1 366.3h1v1h-1zM190.1 375.8h1v1h-1zM190.1 385.3h1v1h-1zM190.1 394.8h1v1h-1zM190.1 404.2h1v1h-1zM190.1 413.7h1v1h-1zM190.1 423.2h1v1h-1zM190.1 432.6h1v1h-1zM190.1 442.1h1v1h-1zM190.1 451.6h1v1h-1zM190.1 461.1h1v1h-1zM190.1 470.6h1v1h-1zM190.1 480.0h1v1h-1zM190.1 489.5h1v1h-1zM199.6 252.6h1v1h-1zM199.6 271.6h1v1h-1zM199.6 281.1h1v1h-1zM199.6 290.5h1v1h-1zM199.6 309.5h1v1h-1zM199.6 319.0h1v1h-1zM199.6 328.4h1v1h-1zM199.6 347.4h1v1h-1zM199.6 356.9h1v1h-1zM199.6 366.3h1v1h-1zM199.6 385.3h1v1h-1zM199.6 394.8h1v1h-1zM199.6 404.2h1v1h-1zM199.6 423.2h1v1h-1zM199.6 432.6h1v1h-1zM199.6 442.1h1v1h-1zM199.6 461.1h1v1h-1zM199.6 470.6h1v1h-1zM199.6 480.0h1v1h-1zM209.1 252.6h1v1h-1zM209.1 262.1h1v1h-1zM209.1 271.6h1v1h-1zM209.1 281.1h1v1h-1zM209.1 290.5h1v1h-1zM209.1 300.0h1v1h-1zM209.1 309.5h1v1h-1zM209.1 319.0h1v1h-1zM209.1 328.4h1v1h-1zM209.1 337.9h1v1h-1zM209.1 347.4h1v1h-1zM209.1 356.9h1v1h-1zM209.1 366.3h1v1h-1zM209.1 375.8h1v1h-1zM209.1 385.3h1v1h-1zM209.1 394.8h1v1h-1zM209.1 404.2h1v1h-1zM209.1 413.7h1v1h-1zM209.1 423.2h1v1h-1zM209.1 432.6h1v1h-1zM209.1 442.1h1v1h-1zM209.1 451.6h1v1h-1zM209.1 461.1h1v1h-1zM209.1 470.6h1v1h-1zM209.1 480.0h1v1h-1zM209.1 489.5h1v1h-1zM218.5 252.6h1v1h-1zM218.5 262.1h1v1h-1zM218.5 271.6h1v1h-1zM218.5 281.1h1v1h-1zM218.5 290.5h1v1h-1zM218.5 300.0h1v1h-1zM218.5 309.5h1v1h-1zM218.5 319.0h1v1h-1zM218.5 328.4h1v1h-1zM218.5 337.9h1v1h-1zM218.5 347.4h1v1h-1zM218.5 356.9h1v1h-1zM218.5 366.3h1v1h-1zM218.5 375.8h1v1h-1zM218.5 385.3h1v1h-1zM218.5 394.8h1v1h-1zM218.5 404.2h1v1h-1zM218.5 413.7h1v1h-1zM218.5 423.2h1v1h-1zM218.5 432.6h1v1h-1zM218.5 442.1h1v1h-1zM218.5 451.6h1v1h-1zM218.5 461.1h1v1h-1zM218.5 470.6h1v1h-1zM218.5 480.0h1v1h-1zM218.5 489.5h1v1h-1zM228.0 252.6h1v1h-1zM228.0 262.1h1v1h-1zM228.0 271.6h1v1h-1zM228.0 281.1h1v1h-1zM228.0 290.5h1v1h-1zM228.0 300.0h1v1h-1zM228.0 309.5h1v1h-1zM228.0 319.0h1v1h-1zM228.0 328.4h1v1h-1zM228.0 337.9h1v1h-1zM228.0 347.4h1v1h-1zM228.0 356.9h1v1h-1zM228.0 366.3h1v1h-1zM228.0 375.8h1v1h-1zM228.0 385.3h1v1h-1zM228.0 394.8h1v1h-1zM228.0 404.2h1v1h-1zM228.0 413.7h1v1h-1zM228.0 423.2h1v1h-1zM228.0 432.6h1v1h-1zM228.0 442.1h1v1h-1zM228.0 451.6h1v1h-1zM228.0 461.1h1v1h-1zM228.0 470.6h1v1h-1zM228.0 480.0h1v1h-1zM228.0 489.5h1v1h-1zM237.5 252.6h1v1h-1zM237.5 271.6h1v1h-1zM237.5 281.1h1v1h-1zM237.5 290.5h1v1h-1zM237.5 309.5h1v1h-1zM237.5 319.0h1v1h-1zM237.5 328.4h1v1h-1zM237.5 347.4h1v1h-1zM237.5 356.9h1v1h-1zM237.5 366.3h1v1h-1zM237.5 385.3h1v1h-1zM237.5 394.8h1v1h-1zM237.5 404.2h1v1h-1zM237.5 423.2h1v1h-1zM237.5 432.6h1v1h-1zM237.5 442.1h1v1h-1zM237.5 461.1h1v1h-1zM237.5 470.6h1v1h-1zM237.5 480.0h1v1h-1zM247.0 252.6h1v1h-1zM247.0 262.1h1v1h-1zM247.0 271.6h1v1h-1zM247.0 281.1h1v1h-1zM247.0 290.5h1v1h-1zM247.0 300.0h1v1h-1zM247.0 309.5h1v1h-1zM247.0 319.0h1v1h-1zM247.0 328.4h1v1h-1zM247.0 337.9h1v1h-1zM247.0 347.4h1v1h-1zM247.0 356.9h1v1h-1zM247.0 366.3h1v1h-1zM247.0 375.8h1v1h-1zM247.0 385.3h1v1h-1zM247.0 394.8h1v1h-1zM247.0 404.2h1v1h-1zM247.0 413.7h1v1h-1zM247.0 423.2h1v1h-1zM247.0 432.6h1v1h-1zM247.0 442.1h1v1h-1zM247.0 451.6h1v1h-1zM247.0 461.1h1v1h-1zM247.0 470.6h1v1h-1zM247.0 480.0h1v1h-1zM247.0 489.5h1v1h-1zM256.4 252.6h1v1h-1zM256.4 262.1h1v1h-1zM256.4 271.6h1v1h-1zM256.4 281.1h1v1h-1zM256.4 290.5h1v1h-1zM256.4 300.0h1v1h-1zM256.4 309.5h1v1h-1zM256.4 319.0h1v1h-1zM256.4 328.4h1v1h-1zM256.4 337.9h1v1h-1zM256.4 347.4h1v1h-1zM256.4 356.9h1v1h-1zM256.4 366.3h1v1h-1zM256.4 375.8h1v1h-1zM256.4 385.3h1v1h-1zM256.4 394.8h1v1h-1zM256.4 404.2h1v1h-1zM256.4 413.7h1v1h-1zM256.4 423.2h1v1h-1zM256.4 432.6h1v1h-1zM256.4 442.1h1v1h-1zM256.4 451.6h1v1h-1zM256.4 461.1h1v1h-1zM256.4 470.6h1v1h-1zM256.4 480.0h1v1h-1zM256.4 489.5h1v1h-1zM265.9 252.6h1v1h-1zM265.9 262.1h1v1h-1zM265.9 271.6h1v1h-1zM265.9 281.1h1v1h-1zM265.9 290.5h1v1h-1zM265.9 300.0h1v1h-1zM265.9 309.5h1v1h-1zM265.9 319.0h1v1h-1zM265.9 328.4h1v1h-1zM265.9 337.9h1v1h-1zM265.9 347.4h1v1h-1zM265.9 356.9h1v1h-1zM265.9 366.3h1v1h-1zM265.9 375.8h1v1h-1zM265.9 385.3h1v1h-1zM265.9 394.8h1v1h-1zM265.9 404.2h1v1h-1zM265.9 413.7h1v1h-1zM265.9 423.2h1v1h-1zM265.9 432.6h1v1h-1zM265.9 442.1h1v1h-1zM265.9 451.6h1v1h-1zM265.9 461.1h1v1h-1zM265.9 470.6h1v1h-1zM265.9 480.0h1v1h-1zM265.9 489.5h1v1h-1zM275.4 252.6h1v1h-1zM275.4 271.6h1v1h-1zM275.4 281.1h1v1h-1zM275.4 290.5h1v1h-1zM275.4 309.5h1v1h-1zM275.4 319.0h1v1h-1zM275.4 328.4h1v1h-1zM275.4 347.4h1v1h-1zM275.4 356.9h1v1h-1zM275.4 366.3h1v1h-1zM275.4 385.3h1v1h-1zM275.4 394.8h1v1h-1zM275.4 404.2h1v1h-1zM275.4 423.2h1v1h-1zM275.4 432.6h1v1h-1zM275.4 442.1h1v1h-1zM275.4 461.1h1v1h-1zM275.4 470.6h1v1h-1zM275.4 480.0h1v1h-1zM284.9 252.6h1v1h-1zM284.9 262.1h1v1h-1zM284.9 271.6h1v1h-1zM284.9 281.1h1v1h-1zM284.9 290.5h1v1h-1zM284.9 300.0h1v1h-1zM284.9 309.5h1v1h-1zM284.9 319.0h1v1h-1zM284.9 328.4h1v1h-1zM284.9 337.9h1v1h-1zM284.9 347.4h1v1h-1zM284.9 356.9h1v1h-1zM284.9 366.3h1v1h-1zM284.9 375.8h1v1h-1zM284.9 385.3h1v1h-1zM284.9 394.8h1v1h-1zM284.9 404.2h1v1h-1zM284.9 413.7h1v1h-1zM284.9 423.2h1v1h-1zM284.9 432.6h1v1h-1zM284.9 442.1h1v1h-1zM284.9 451.6h1v1h-1zM284.9 461.1h1v1h-1zM284.9 470.6h1v1h-1zM284.9 480.0h1v1h-1zM284.9 489.5h1v1h-1zM294.4 252.6h1v1h-1zM294.4 262.1h1v1h-1zM294.4 271.6h1v1h-1zM294.4 281.1h1v1h-1zM294.4 290.5h1v1h-1zM294.4 300.0h1v1h-1zM294.4 309.5h1v1h-1zM294.4 319.0h1v1h-1zM294.4 328.4h1v1h-1zM294.4 337.9h1v1h-1zM294.4 347.4h1v1h-1zM294.4 356.9h1v1h-1zM294.4 366.3h1v1h-1zM294.4 375.8h1v1h-1zM294.4 385.3h1v1h-1zM294.4 394.8h1v1h-1zM294.4 404.2h1v1h-1zM294.4 413.7h1v1h-1zM294.4 423.2h1v1h-1zM294.4 432.6h1v1h-1zM294.4 442.1h1v1h-1zM294.4 451.6h1v1h-1zM294.4 461.1h1v1h-1zM294.4 470.6h1v1h-1zM294.4 480.0h1v1h-1zM294.4 489.5h1v1h-1zM303.8 252.6h1v1h-1zM303.8 262.1h1v1h-1zM303.8 271.6h1v1h-1zM303.8 281.1h1v1h-1zM303.8 290.5h1v1h-1zM303.8 300.0h1v1h-1zM303.8 309.5h1v1h-1zM303.8 319.0h1v1h-1zM303.8 328.4h1v1h-1zM303.8 337.9h1v1h-1zM303.8 347.4h1v1h-1zM303.8 356.9h1v1h-1zM303.8 366.3h1v1h-1zM303.8 375.8h1v1h-1zM303.8 385.3h1v1h-1zM303.8 394.8h1v1h-1zM303.8 404.2h1v1h-1zM303.8 413.7h1v1h-1zM303.8 423.2h1v1h-1zM303.8 432.6h1v1h-1zM303.8 442.1h1v1h-1zM303.8 451.6h1v1h-1zM303.8 461.1h1v1h-1zM303.8 470.6h1v1h-1zM303.8 480.0h1v1h-1zM303.8 489.5h1v1h-1zM313.3 252.6h1v1h-1zM313.3 271.6h1v1h-1zM313.3 281.1h1v1h-1zM313.3 290.5h1v1h-1zM313.3 309.5h1v1h-1zM313.3 319.0h1v1h-1zM313.3 328.4h1v1h-1zM313.3 347.4h1v1h-1zM313.3 356.9h1v1h-1zM313.3 366.3h1v1h-1zM313.3 385.3h1v1h-1zM313.3 394.8h1v1h-1zM313.3 404.2h1v1h-1zM313.3 423.2h1v1h-1zM313.3 432.6h1v1h-1zM313.3 442.1h1v1h-1zM313.3 461.1h1v1h-1zM313.3 470.6h1v1h-1zM313.3 480.0h1v1h-1zM322.8 252.6h1v1h-1zM322.8 262.1h1v1h-1zM322.8 271.6h1v1h-1zM322.8 281.1h1v1h-1zM322.8 290.5h1v1h-1zM322.8 300.0h1v1h-1zM322.8 309.5h1v1h-1zM322.8 319.0h1v1h-1zM322.8 328.4h1v1h-1zM322.8 337.9h1v1h-1zM322.8 347.4h1v1h-1zM322.8 356.9h1v1h-1zM322.8 366.3h1v1h-1zM322.8 375.8h1v1h-1zM322.8 385.3h1v1h-1zM322.8 394.8h1v1h-1zM322.8 404.2h1v1h-1zM322.8 413.7h1v1h-1zM322.8 423.2h1v1h-1zM322.8 432.6h1v1h-1zM322.8 442.1h1v1h-1zM322.8 451.6h1v1h-1zM322.8 461.1h1v1h-1zM322.8 470.6h1v1h-1zM322.8 480.0h1v1h-1zM322.8 489.5h1v1h-1zM332.2 252.6h1v1h-1zM332.2 262.1h1v1h-1zM332.2 271.6h1v1h-1zM332.2 281.1h1v1h-1zM332.2 290.5h1v1h-1zM332.2 300.0h1v1h-1zM332.2 309.5h1v1h-1zM332.2 319.0h1v1h-1zM332.2 328.4h1v1h-1zM332.2 337.9h1v1h-1zM332.2 347.4h1v1h-1zM332.2 356.9h1v1h-1zM332.2 366.3h1v1h-1zM332.2 375.8h1v1h-1zM332.2 385.3h1v1h-1zM332.2 394.8h1v1h-1zM332.2 404.2h1v1h-1zM332.2 413.7h1v1h-1zM332.2 423.2h1v1h-1zM332.2 432.6h1v1h-1zM332.2 442.1h1v1h-1zM332.2 451.6h1v1h-1zM332.2 461.1h1v1h-1zM332.2 470.6h1v1h-1zM332.2 480.0h1v1h-1zM332.2 489.5h1v1h-1zM341.7 252.6h1v1h-1zM341.7 262.1h1v1h-1zM341.7 271.6h1v1h-1zM341.7 281.1h1v1h-1zM341.7 290.5h1v1h-1zM341.7 300.0h1v1h-1zM341.7 309.5h1v1h-1zM341.7 319.0h1v1h-1zM341.7 328.4h1v1h-1zM341.7 337.9h1v1h-1zM341.7 347.4h1v1h-1zM341.7 356.9h1v1h-1zM341.7 366.3h1v1h-1zM341.7 375.8h1v1h-1zM341.7 385.3h1v1h-1zM341.7 394.8h1v1h-1zM341.7 404.2h1v1h-1zM341.7 413.7h1v1h-1zM341.7 423.2h1v1h-1zM341.7 432.6h1v1h-1zM341.7 442.1h1v1h-1zM341.7 451.6h1v1h-1zM341.7 461.1h1v1h-1zM341.7 470.6h1v1h-1zM341.7 480.0h1v1h-1zM341.7 489.5h1v1h-1zM351.2 252.6h1v1h-1zM351.2 271.6h1v1h-1zM351.2 281.1h1v1h-1zM351.2 290.5h1v1h-1zM351.2 309.5h1v1h-1zM351.2 319.0h1v1h-1zM351.2 328.4h1v1h-1zM351.2 347.4h1v1h-1zM351.2 356.9h1v1h-1zM351.2 366.3h1v1h-1zM351.2 385.3h1v1h-1zM351.2 394.8h1v1h-1zM351.2 404.2h1v1h-1zM351.2 423.2h1v1h-1zM351.2 432.6h1v1h-1zM351.2 442.1h1v1h-1zM351.2 461.1h1v1h-1zM351.2 470.6h1v1h-1zM351.2 480.0h1v1h-1zM360.7 252.6h1v1h-1zM360.7 262.1h1v1h-1zM360.7 271.6h1v1h-1zM360.7 281.1h1v1h-1zM360.7 290.5h1v1h-1zM360.7 300.0h1v1h-1zM360.7 309.5h1v1h-1zM360.7 319.0h1v1h-1zM360.7 328.4h1v1h-1zM360.7 337.9h1v1h-1zM360.7 347.4h1v1h-1zM360.7 356.9h1v1h-1zM360.7 366.3h1v1h-1zM360.7 375.8h1v1h-1zM360.7 385.3h1v1h-1zM360.7 394.8h1v1h-1zM360.7 404.2h1v1h-1zM360.7 413.7h1v1h-1zM360.7 423.2h1v1h-1zM360.7 432.6h1v1h-1zM360.7 442.1h1v1h-1zM360.7 451.6h1v1h-1zM360.7 461.1h1v1h-1zM360.7 470.6h1v1h-1zM360.7 480.0h1v1h-1zM360.7 489.5h1v1h-1zM370.1 252.6h1v1h-1zM370.1 262.1h1v1h-1zM370.1 271.6h1v1h-1zM370.1 281.1h1v1h-1zM370.1 290.5h1v1h-1zM370.1 300.0h1v1h-1zM370.1 309.5h1v1h-1zM370.1 319.0h1v1h-1zM370.1 328.4h1v1h-1zM370.1 337.9h1v1h-1zM370.1 347.4h1v1h-1zM370.1 356.9h1v1h-1zM370.1 366.3h1v1h-1zM370.1 375.8h1v1h-1zM370.1 385.3h1v1h-1zM370.1 394.8h1v1h-1zM370.1 404.2h1v1h-1zM370.1 413.7h1v1h-1zM370.1 423.2h1v1h-1zM370.1 432.6h1v1h-1zM370.1 442.1h1v1h-1zM370.1 451.6h1v1h-1zM370.1 461.1h1v1h-1zM370.1 470.6h1v1h-1zM370.1 480.0h1v1h-1zM370.1 489.5h1v1h-1zM379.6 252.6h1v1h-1zM379.6 262.1h1v1h-1zM379.6 271.6h1v1h-1zM379.6 281.1h1v1h-1zM379.6 290.5h1v1h-1zM379.6 300.0h1v1h-1zM379.6 309.5h1v1h-1zM379.6 319.0h1v1h-1zM379.6 328.4h1v1h-1zM379.6 337.9h1v1h-1zM379.6 347.4h1v1h-1zM379.6 356.9h1v1h-1zM379.6 366.3h1v1h-1zM379.6 375.8h1v1h-1zM379.6 385.3h1v1h-1zM379.6 394.8h1v1h-1zM379.6 404.2h1v1h-1zM379.6 413.7h1v1h-1zM379.6 423.2h1v1h-1zM379.6 432.6h1v1h-1zM379.6 442.1h1v1h-1zM379.6 451.6h1v1h-1zM379.6 461.1h1v1h-1zM379.6 470.6h1v1h-1zM379.6 480.0h1v1h-1zM379.6 489.5h1v1h-1zM389.1 252.6h1v1h-1zM389.1 271.6h1v1h-1zM389.1 281.1h1v1h-1zM389.1 290.5h1v1h-1zM389.1 309.5h1v1h-1zM389.1 319.0h1v1h-1zM389.1 328.4h1v1h-1zM389.1 347.4h1v1h-1zM389.1 356.9h1v1h-1zM389.1 366.3h1v1h-1zM389.1 385.3h1v1h-1zM389.1 394.8h1v1h-1zM389.1 404.2h1v1h-1zM389.1 423.2h1v1h-1zM389.1 432.6h1v1h-1zM389.1 442.1h1v1h-1zM389.1 461.1h1v1h-1zM389.1 470.6h1v1h-1zM389.1 480.0h1v1h-1zM398.6 252.6h1v1h-1zM398.6 262.1h1v1h-1zM398.6 271.6h1v1h-1zM398.6 281.1h1v1h-1zM398.6 290.5h1v1h-1zM398.6 300.0h1v1h-1zM398.6 309.5h1v1h-1zM398.6 319.0h1v1h-1zM398.6 328.4h1v1h-1zM398.6 337.9h1v1h-1zM398.6 347.4h1v1h-1zM398.6 356.9h1v1h-1zM398.6 366.3h1v1h-1zM398.6 375.8h1v1h-1zM398.6 385.3h1v1h-1zM398.6 394.8h1v1h-1zM398.6 404.2h1v1h-1zM398.6 413.7h1v1h-1zM398.6 423.2h1v1h-1zM398.6 432.6h1v1h-1zM398.6 442.1h1v1h-1zM398.6 451.6h1v1h-1zM398.6 461.1h1v1h-1zM398.6 470.6h1v1h-1zM398.6 480.0h1v1h-1zM398.6 489.5h1v1h-1zM408.0 252.6h1v1h-1zM408.0 262.1h1v1h-1zM408.0 271.6h1v1h-1zM408.0 281.1h1v1h-1zM408.0 290.5h1v1h-1zM408.0 300.0h1v1h-1zM408.0 309.5h1v1h-1zM408.0 319.0h1v1h-1zM408.0 328.4h1v1h-1zM408.0 337.9h1v1h-1zM408.0 347.4h1v1h-1zM408.0 356.9h1v1h-1zM408.0 366.3h1v1h-1zM408.0 375.8h1v1h-1zM408.0 385.3h1v1h-1zM408.0 394.8h1v1h-1zM408.0 404.2h1v1h-1zM408.0 413.7h1v1h-1zM408.0 423.2h1v1h-1zM408.0 432.6h1v1h-1zM408.0 442.1h1v1h-1zM408.0 451.6h1v1h-1zM408.0 461.1h1v1h-1zM408.0 470.6h1v1h-1zM408.0 480.0h1v1h-1zM408.0 489.5h1v1h-1zM417.5 252.6h1v1h-1zM417.5 262.1h1v1h-1zM417.5 271.6h1v1h-1zM417.5 281.1h1v1h-1zM417.5 290.5h1v1h-1zM417.5 300.0h1v1h-1zM417.5 309.5h1v1h-1zM417.5 319.0h1v1h-1zM417.5 328.4h1v1h-1zM417.5 337.9h1v1h-1zM417.5 347.4h1v1h-1zM417.5 356.9h1v1h-1zM417.5 366.3h1v1h-1zM417.5 375.8h1v1h-1zM417.5 385.3h1v1h-1zM417.5 394.8h1v1h-1zM417.5 404.2h1v1h-1zM417.5 413.7h1v1h-1zM417.5 423.2h1v1h-1zM417.5 432.6h1v1h-1zM417.5 442.1h1v1h-1zM417.5 451.6h1v1h-1zM417.5 461.1h1v1h-1zM417.5 470.6h1v1h-1zM417.5 480.0h1v1h-1zM417.5 489.5h1v1h-1zM427.0 252.6h1v1h-1zM427.0 271.6h1v1h-1zM427.0 281.1h1v1h-1zM427.0 290.5h1v1h-1zM427.0 309.5h1v1h-1zM427.0 319.0h1v1h-1zM427.0 328.4h1v1h-1zM427.0 347.4h1v1h-1zM427.0 356.9h1v1h-1zM427.0 366.3h1v1h-1zM427.0 385.3h1v1h-1zM427.0 394.8h1v1h-1zM427.0 404.2h1v1h-1zM427.0 423.2h1v1h-1zM427.0 432.6h1v1h-1zM427.0 442.1h1v1h-1zM427.0 461.1h1v1h-1zM427.0 470.6h1v1h-1zM427.0 480.0h1v1h-1zM436.5 252.6h1v1h-1zM436.5 262.1h1v1h-1zM436.5 271.6h1v1h-1zM436.5 281.1h1v1h-1zM436.5 290.5h1v1h-1zM436.5 300.0h1v1h-1zM436.5 309.5h1v1h-1zM436.5 319.0h1v1h-1zM436.5 328.4h1v1h-1zM436.5 337.9h1v1h-1zM436.5 347.4h1v1h-1zM436.5 356.9h1v1h-1zM436.5 366.3h1v1h-1zM436.5 375.8h1v1h-1zM436.5 385.3h1v1h-1zM436.5 394.8h1v1h-1zM436.5 404.2h1v1h-1zM436.5 413.7h1v1h-1zM436.5 423.2h1v1h-1zM436.5 432.6h1v1h-1zM436.5 442.1h1v1h-1zM436.5 451.6h1v1h-1zM436.5 461.1h1v1h-1zM436.5 470.6h1v1h-1zM436.5 480.0h1v1h-1zM436.5 489.5h1v1h-1zM445.9 252.6h1v1h-1zM445.9 262.1h1v1h-1zM445.9 271.6h1v1h-1zM445.9 281.1h1v1h-1zM445.9 290.5h1v1h-1zM445.9 300.0h1v1h-1zM445.9 309.5h1v1h-1zM445.9 319.0h1v1h-1zM445.9 328.4h1v1h-1zM445.9 337.9h1v1h-1zM445.9 347.4h1v1h-1zM445.9 356.9h1v1h-1zM445.9 366.3h1v1h-1zM445.9 375.8h1v1h-1zM445.9 385.3h1v1h-1zM445.9 394.8h1v1h-1zM445.9 404.2h1v1h-1zM445.9 413.7h1v1h-1zM445.9 423.2h1v1h-1zM445.9 432.6h1v1h-1zM445.9 442.1h1v1h-1zM445.9 451.6h1v1h-1zM445.9 461.1h1v1h-1zM445.9 470.6h1v1h-1zM445.9 480.0h1v1h-1zM445.9 489.5h1v1h-1zM455.4 252.6h1v1h-1zM455.4 262.1h1v1h-1zM455.4 271.6h1v1h-1zM455.4 281.1h1v1h-1zM455.4 290.5h1v1h-1zM455.4 300.0h1v1h-1zM455.4 309.5h1v1h-1zM455.4 319.0h1v1h-1zM455.4 328.4h1v1h-1zM455.4 337.9h1v1h-1zM455.4 347.4h1v1h-1zM455.4 356.9h1v1h-1zM455.4 366.3h1v1h-1zM455.4 375.8h1v1h-1zM455.4 385.3h1v1h-1zM455.4 394.8h1v1h-1zM455.4 404.2h1v1h-1zM455.4 413.7h1v1h-1zM455.4 423.2h1v1h-1zM455.4 432.6h1v1h-1zM455.4 442.1h1v1h-1zM455.4 451.6h1v1h-1zM455.4 461.1h1v1h-1zM455.4 470.6h1v1h-1zM455.4 480.0h1v1h-1zM455.4 489.5h1v1h-1zM464.9 252.6h1v1h-1zM464.9 271.6h1v1h-1zM464.9 281.1h1v1h-1zM464.9 290.5h1v1h-1zM464.9 309.5h1v1h-1zM464.9 319.0h1v1h-1zM464.9 328.4h1v1h-1zM464.9 347.4h1v1h-1zM464.9 356.9h1v1h-1zM464.9 366.3h1v1h-1zM464.9 385.3h1v1h-1zM464.9 394.8h1v1h-1zM464.9 404.2h1v1h-1zM464.9 423.2h1v1h-1zM464.9 432.6h1v1h-1zM464.9 442.1h1v1h-1zM464.9 461.1h1v1h-1zM464.9 470.6h1v1h-1zM464.9 480.0h1v1h-1zM474.4 252.6h1v1h-1zM474.4 262.1h1v1h-1zM474.4 271.6h1v1h-1zM474.4 281.1h1v1h-1zM474.4 290.5h1v1h-1zM474.4 300.0h1v1h-1zM474.4 309.5h1v1h-1zM474.4 319.0h1v1h-1zM474.4 328.4h1v1h-1zM474.4 337.9h1v1h-1zM474.4 347.4h1v1h-1zM474.4 356.9h1v1h-1zM474.4 366.3h1v1h-1zM474.4 375.8h1v1h-1zM474.4 385.3h1v1h-1zM474.4 394.8h1v1h-1zM474.4 404.2h1v1h-1zM474.4 413.7h1v1h-1zM474.4 423.2h1v1h-1zM474.4 432.6h1v1h-1zM474.4 442.1h1v1h-1zM474.4 451.6h1v1h-1zM474.4 461.1h1v1h-1zM474.4 470.6h1v1h-1zM474.4 480.0h1v1h-1zM474.4 489.5h1v1h-1zM483.8 252.6h1v1h-1zM483.8 262.1h1v1h-1zM483.8 271.6h1v1h-1zM483.8 281.1h1v1h-1zM483.8 290.5h1v1h-1zM483.8 300.0h1v1h-1zM483.8 309.5h1v1h-1zM483.8 319.0h1v1h-1zM483.8 328.4h1v1h-1zM483.8 337.9h1v1h-1zM483.8 347.4h1v1h-1zM483.8 356.9h1v1h-1zM483.8 366.3h1v1h-1zM483.8 375.8h1v1h-1zM483.8 385.3h1v1h-1zM483.8 394.8h1v1h-1zM483.8 404.2h1v1h-1zM483.8 413.7h1v1h-1zM483.8 423.2h1v1h-1zM483.8 432.6h1v1h-1zM483.8 442.1h1v1h-1zM483.8 451.6h1v1h-1zM483.8 461.1h1v1h-1zM483.8 470.6h1v1h-1zM483.8 480.0h1v1h-1zM483.8 489.5h1v1h-1zM493.3 252.6h1v1h-1zM493.3 262.1h1v1h-1zM493.3 271.6h1v1h-1zM493.3 281.1h1v1h-1zM493.3 290.5h1v1h-1zM493.3 300.0h1v1h-1zM493.3 309.5h1v1h-1zM493.3 319.0h1v1h-1zM493.3 328.4h1v1h-1zM493.3 337.9h1v1h-1zM493.3 347.4h1v1h-1zM493.3 356.9h1v1h-1zM493.3 366.3h1v1h-1zM493.3 375.8h1v1h-1zM493.3 385.3h1v1h-1zM493.3 394.8h1v1h-1zM493.3 404.2h1v1h-1zM493.3 413.7h1v1h-1zM493.3 423.2h1v1h-1zM493.3 432.6h1v1h-1zM493.3 442.1h1v1h-1zM493.3 451.6h1v1h-1zM493.3 461.1h1v1h-1zM493.3 470.6h1v1h-1zM493.3 480.0h1v1h-1zM493.3 489.5h1v1h-1zM502.8 252.6h1v1h-1zM502.8 271.6h1v1h-1zM502.8 281.1h1v1h-1zM502.8 290.5h1v1h-1zM502.8 309.5h1v1h-1zM502.8 319.0h1v1h-1zM502.8 328.4h1v1h-1zM502.8 347.4h1v1h-1zM502.8 356.9h1v1h-1zM502.8 366.3h1v1h-1zM502.8 385.3h1v1h-1zM502.8 394.8h1v1h-1zM502.8 404.2h1v1h-1zM502.8 423.2h1v1h-1zM502.8 432.6h1v1h-1zM502.8 442.1h1v1h-1zM502.8 461.1h1v1h-1zM502.8 470.6h1v1h-1zM502.8 480.0h1v1h-1zM512.3 252.6h1v1h-1zM512.3 262.1h1v1h-1zM512.3 271.6h1v1h-1zM512.3 281.1h1v1h-1zM512.3 290.5h1v1h-1zM512.3 300.0h1v1h-1zM512.3 309.5h1v1h-1zM512.3 319.0h1v1h-1zM512.3 328.4h1v1h-1zM512.3 337.9h1v1h-1zM512.3 347.4h1v1h-1zM512.3 356.9h1v1h-1zM512.3 366.3h1v1h-1zM512.3 375.8h1v1h-1zM512.3 385.3h1v1h-1zM512.3 394.8h1v1h-1zM512.3 404.2h1v1h-1zM512.3 413.7h1v1h-1zM512.3 423.2h1v1h-1zM512.3 432.6h1v1h-1zM512.3 442.1h1v1h-1zM512.3 451.6h1v1h-1zM512.3 461.1h1v1h-1zM512.3 470.6h1v1h-1zM512.3 480.0h1v1h-1zM512.3 489.5h1v1h-1zM521.8 252.6h1v1h-1zM521.8 262.1h1v1h-1zM521.8 271.6h1v1h-1zM521.8 281.1h1v1h-1zM521.8 290.5h1v1h-1zM521.8 300.0h1v1h-1zM521.8 309.5h1v1h-1zM521.8 319.0h1v1h-1zM521.8 328.4h1v1h-1zM521.8 337.9h1v1h-1zM521.8 347.4h1v1h-1zM521.8 356.9h1v1h-1zM521.8 366.3h1v1h-1zM521.8 375.8h1v1h-1zM521.8 385.3h1v1h-1zM521.8 394.8h1v1h-1zM521.8 404.2h1v1h-1zM521.8 413.7h1v1h-1zM521.8 423.2h1v1h-1zM521.8 432.6h1v1h-1zM521.8 442.1h1v1h-1zM521.8 451.6h1v1h-1zM521.8 461.1h1v1h-1zM521.8 470.6h1v1h-1zM521.8 480.0h1v1h-1zM521.8 489.5h1v1h-1zM531.2 252.6h1v1h-1zM531.2 262.1h1v1h-1zM531.2 271.6h1v1h-1zM531.2 281.1h1v1h-1zM531.2 290.5h1v1h-1zM531.2 300.0h1v1h-1zM531.2 309.5h1v1h-1zM531.2 319.0h1v1h-1zM531.2 328.4h1v1h-1zM531.2 337.9h1v1h-1zM531.2 347.4h1v1h-1zM531.2 356.9h1v1h-1zM531.2 366.3h1v1h-1zM531.2 375.8h1v1h-1zM531.2 385.3h1v1h-1zM531.2 394.8h1v1h-1zM531.2 404.2h1v1h-1zM531.2 413.7h1v1h-1zM531.2 423.2h1v1h-1zM531.2 432.6h1v1h-1zM531.2 442.1h1v1h-1zM531.2 451.6h1v1h-1zM531.2 461.1h1v1h-1zM531.2 470.6h1v1h-1zM531.2 480.0h1v1h-1zM531.2 489.5h1v1h-1zM540.7 252.6h1v1h-1zM540.7 271.6h1v1h-1zM540.7 281.1h1v1h-1zM540.7 290.5h1v1h-1zM540.7 309.5h1v1h-1zM540.7 319.0h1v1h-1zM540.7 328.4h1v1h-1zM540.7 347.4h1v1h-1zM540.7 356.9h1v1h-1zM540.7 366.3h1v1h-1zM540.7 385.3h1v1h-1zM540.7 394.8h1v1h-1zM540.7 404.2h1v1h-1zM540.7 423.2h1v1h-1zM540.7 432.6h1v1h-1zM540.7 442.1h1v1h-1zM540.7 461.1h1v1h-1zM540.7 470.6h1v1h-1zM540.7 480.0h1v1h-1zM550.2 252.6h1v1h-1zM550.2 262.1h1v1h-1zM550.2 271.6h1v1h-1zM550.2 281.1h1v1h-1zM550.2 290.5h1v1h-1zM550.2 300.0h1v1h-1zM550.2 309.5h1v1h-1zM550.2 319.0h1v1h-1zM550.2 328.4h1v1h-1zM550.2 337.9h1v1h-1zM550.2 347.4h1v1h-1zM550.2 356.9h1v1h-1zM550.2 366.3h1v1h-1zM550.2 375.8h1v1h-1zM550.2 385.3h1v1h-1zM550.2 394.8h1v1h-1zM550.2 404.2h1v1h-1zM550.2 413.7h1v1h-1zM550.2 423.2h1v1h-1zM550.2 432.6h1v1h-1zM550.2 442.1h1v1h-1zM550.2 451.6h1v1h-1zM550.2 461.1h1v1h-1zM550.2 470.6h1v1h-1zM550.2 480.0h1v1h-1zM550.2 489.5h1v1h-1zM559.6 252.6h1v1h-1zM559.6 262.1h1v1h-1zM559.6 271.6h1v1h-1zM559.6 281.1h1v1h-1zM559.6 290.5h1v1h-1zM559.6 300.0h1v1h-1zM559.6 309.5h1v1h-1zM559.6 319.0h1v1h-1zM559.6 328.4h1v1h-1zM559.6 337.9h1v1h-1zM559.6 347.4h1v1h-1zM559.6 356.9h1v1h-1zM559.6 366.3h1v1h-1zM559.6 375.8h1v1h-1zM559.6 385.3h1v1h-1zM559.6 394.8h1v1h-1zM559.6 404.2h1v1h-1zM559.6 413.7h1v1h-1zM559.6 423.2h1v1h-1zM559.6 432.6h1v1h-1zM559.6 442.1h1v1h-1zM559.6 451.6h1v1h-1zM559.6 461.1h1v1h-1zM559.6 470.6h1v1h-1zM559.6 480.0h1v1h-1zM559.6 489.5h1v1h-1z" fill="#bcbcbc"/>
<path d="M161.3 261.7h1.8v1.8h-1.8zM161.3 299.6h1.8v1.8h-1.8zM161.3 337.5h1.8v1.8h-1.8zM161.3 375.4h1.8v1.8h-1.8zM161.3 413.3h1.8v1.8h-1.8zM161.3 451.2h1.8v1.8h-1.8zM161.3 489.1h1.8v1.8h-1.8zM199.2 261.7h1.8v1.8h-1.8zM199.2 299.6h1.8v1.8h-1.8zM199.2 337.5h1.8v1.8h-1.8zM199.2 375.4h1.8v1.8h-1.8zM199.2 413.3h1.8v1.8h-1.8zM199.2 451.2h1.8v1.8h-1.8zM199.2 489.1h1.8v1.8h-1.8zM237.1 261.7h1.8v1.8h-1.8zM237.1 299.6h1.8v1.8h-1.8zM237.1 337.5h1.8v1.8h-1.8zM237.1 375.4h1.8v1.8h-1.8zM237.1 413.3h1.8v1.8h-1.8zM237.1 451.2h1.8v1.8h-1.8zM237.1 489.1h1.8v1.8h-1.8zM275.0 261.7h1.8v1.8h-1.8zM275.0 299.6h1.8v1.8h-1.8zM275.0 337.5h1.8v1.8h-1.8zM275.0 375.4h1.8v1.8h-1.8zM275.0 413.3h1.8v1.8h-1.8zM275.0 451.2h1.8v1.8h-1.8zM275.0 489.1h1.8v1.8h-1.8zM312.9 261.7h1.8v1.8h-1.8zM312.9 299.6h1.8v1.8h-1.8zM312.9 337.5h1.8v1.8h-1.8zM312.9 375.4h1.8v1.8h-1.8zM312.9 413.3h1.8v1.8h-1.8zM312.9 451.2h1.8v1.8h-1.8zM312.9 489.1h1.8v1.8h-1.8zM350.8 261.7h1.8v1.8h-1.8zM350.8 299.6h1.8v1.8h-1.8zM350.8 337.5h1.8v1.8h-1.8zM350.8 375.4h1.8v1.8h-1.8zM350.8 413.3h1.8v1.8h-1.8zM350.8 451.2h1.8v1.8h-1.8zM350.8 489.1h1.8v1.8h-1.8zM388.7 261.7h1.8v1.8h-1.8zM388.7 299.6h1.8v1.8h-1.8zM388.7 337.5h1.8v1.8h-1.8zM388.7 375.4h1.8v1.8h-1.8zM388.7 413.3h1.8v1.8h-1.8zM388.7 451.2h1.8v1.8h-1.8zM388.7 489.1h1.8v1.8h-1.8zM426.6 261.7h1.8v1.8h-1.8zM426.6 299.6h1.8v1.8h-1.8zM426.6 337.5h1.8v1.8h-1.8zM426.6 375.4h1.8v1.8h-1.8zM426.6 413.3h1.8v1.8h-1.8zM426.6 451.2h1.8v1.8h-1.8zM426.6 489.1h1.8v1.8h-1.8zM464.5 261.7h1.8v1.8h-1.8zM464.5 299.6h1.8v1.8h-1.8zM464.5 337.5h1.8v1.8h-1.8zM464.5 375.4h1.8v1.8h-1.8zM464.5 413.3h1.8v1.8h-1.8zM464.5 451.2h1.8v1.8h-1.8zM464.5 489.1h1.8v1.8h-1.8zM502.4 261.7h1.8v1.8h-1.8zM502.4 299.6h1.8v1.8h-1.8zM502.4 337.5h1.8v1.8h-1.8zM502.4 375.4h1.8v1.8h-1.8zM502.4 413.3h1.8v1.8h-1.8zM502.4 451.2h1.8v1.8h-1.8zM502.4 489.1h1.8v1.8h-1.8zM540.3 261.7h1.8v1.8h-1.8zM540.3 299.6h1.8v1.8h-1.8zM540.3 337.5h1.8v1.8h-1.8zM540.3 375.4h1.8v1.8h-1.8zM540.3 413.3h1.8v1.8h-1.8zM540.3 451.2h1.8v1.8h-1.8zM540.3 489.1h1.8v1.8h-1.8z" fill="#1c1c1c"/>
<path d="M539.4 252.4 V254.4 H543.2 V252.4" fill="none" stroke="#a89a20" stroke-width="0.9"/>
<rect x="261.5" y="274.3" width="189.5" height="189.6" fill="none" stroke="#20ff20" stroke-width="1"/>
<path d="M262.2 293.5 H450.4 V444.6 H262.2 Z M262.2 299.9 H280.8 V438.1 H262.2 M450.4 299.9 H431.6 V438.1 H450.4 M267.1 274.5 V278.8 L265.4 281.9 V289.3 H274.2 V281.9 L272.5 278.8 V274.5 M267.5 463.7 V458.9 L265.8 455.8 V448.4 H273.8 V455.8 L272.1 458.9 V463.7 M280.4 274.5 V278.8 L278.7 281.9 V289.3 H287.5 V281.9 L285.8 278.8 V274.5 M280.8 463.7 V458.9 L279.1 455.8 V448.4 H287.1 V455.8 L285.4 458.9 V463.7 M293.8 274.5 V278.8 L292.1 281.9 V289.3 H300.9 V281.9 L299.2 278.8 V274.5 M294.2 463.7 V458.9 L292.5 455.8 V448.4 H300.5 V455.8 L298.8 458.9 V463.7 M307.1 274.5 V278.8 L305.4 281.9 V289.3 H314.2 V281.9 L312.5 278.8 V274.5 M307.5 463.7 V458.9 L305.8 455.8 V448.4 H313.8 V455.8 L312.1 458.9 V463.7 M320.4 274.5 V278.8 L318.7 281.9 V289.3 H327.5 V281.9 L325.8 278.8 V274.5 M320.8 463.7 V458.9 L319.1 455.8 V448.4 H327.1 V455.8 L325.4 458.9 V463.7 M333.8 274.5 V278.8 L332.1 281.9 V289.3 H340.9 V281.9 L339.2 278.8 V274.5 M334.2 463.7 V458.9 L332.5 455.8 V448.4 H340.5 V455.8 L338.8 458.9 V463.7 M347.1 274.5 V278.8 L345.4 281.9 V289.3 H354.2 V281.9 L352.5 278.8 V274.5 M347.5 463.7 V458.9 L345.8 455.8 V448.4 H353.8 V455.8 L352.1 458.9 V463.7 M360.4 274.5 V278.8 L358.7 281.9 V289.3 H367.5 V281.9 L365.8 278.8 V274.5 M360.8 463.7 V458.9 L359.1 455.8 V448.4 H367.1 V455.8 L365.4 458.9 V463.7 M373.7 274.5 V278.8 L372.0 281.9 V289.3 H380.8 V281.9 L379.1 278.8 V274.5 M374.1 463.7 V458.9 L372.4 455.8 V448.4 H380.4 V455.8 L378.7 458.9 V463.7 M387.1 274.5 V278.8 L385.4 281.9 V289.3 H394.2 V281.9 L392.5 278.8 V274.5 M387.5 463.7 V458.9 L385.8 455.8 V448.4 H393.8 V455.8 L392.1 458.9 V463.7 M400.4 274.5 V278.8 L398.7 281.9 V289.3 H407.5 V281.9 L405.8 278.8 V274.5 M400.8 463.7 V458.9 L399.1 455.8 V448.4 H407.1 V455.8 L405.4 458.9 V463.7 M413.7 274.5 V278.8 L412.0 281.9 V289.3 H420.8 V281.9 L419.1 278.8 V274.5 M414.1 463.7 V458.9 L412.4 455.8 V448.4 H420.4 V455.8 L418.7 458.9 V463.7 M427.1 274.5 V278.8 L425.4 281.9 V289.3 H434.2 V281.9 L432.5 278.8 V274.5 M427.5 463.7 V458.9 L425.8 455.8 V448.4 H433.8 V455.8 L432.1 458.9 V463.7 M440.4 274.5 V278.8 L438.7 281.9 V289.3 H447.5 V281.9 L445.8 278.8 V274.5 M440.8 463.7 V458.9 L439.1 455.8 V448.4 H447.1 V455.8 L445.4 458.9 V463.7 M262 306.4 H267 L269.4 304.3 H276.8 V312.5 H269.4 L267 310.4 H262 M450.6 306.4 H445.6 L443.2 304.3 H435.8 V312.5 H443.2 L445.6 310.4 H450.6 M262 319.8 H267 L269.4 317.7 H276.8 V325.9 H269.4 L267 323.8 H262 M450.6 319.8 H445.6 L443.2 317.7 H435.8 V325.9 H443.2 L445.6 323.8 H450.6 M262 333.2 H267 L269.4 331.1 H276.8 V339.3 H269.4 L267 337.2 H262 M450.6 333.2 H445.6 L443.2 331.1 H435.8 V339.3 H443.2 L445.6 337.2 H450.6 M262 346.6 H267 L269.4 344.5 H276.8 V352.7 H269.4 L267 350.6 H262 M450.6 346.6 H445.6 L443.2 344.5 H435.8 V352.7 H443.2 L445.6 350.6 H450.6 M262 360.0 H267 L269.4 357.9 H276.8 V366.1 H269.4 L267 364.0 H262 M450.6 360.0 H445.6 L443.2 357.9 H435.8 V366.1 H443.2 L445.6 364.0 H450.6 M262 373.4 H267 L269.4 371.3 H276.8 V379.5 H269.4 L267 377.4 H262 M450.6 373.4 H445.6 L443.2 371.3 H435.8 V379.5 H443.2 L445.6 377.4 H450.6 M262 386.8 H267 L269.4 384.7 H276.8 V392.9 H269.4 L267 390.8 H262 M450.6 386.8 H445.6 L443.2 384.7 H435.8 V392.9 H443.2 L445.6 390.8 H450.6 M262 400.2 H267 L269.4 398.1 H276.8 V406.3 H269.4 L267 404.2 H262 M450.6 400.2 H445.6 L443.2 398.1 H435.8 V406.3 H443.2 L445.6 404.2 H450.6 M262 413.6 H267 L269.4 411.5 H276.8 V419.7 H269.4 L267 417.6 H262 M450.6 413.6 H445.6 L443.2 411.5 H435.8 V419.7 H443.2 L445.6 417.6 H450.6 M262 427.0 H267 L269.4 424.9 H276.8 V433.1 H269.4 L267 431.0 H262 M450.6 427.0 H445.6 L443.2 424.9 H435.8 V433.1 H443.2 L445.6 431.0 H450.6" fill="none" stroke="#ff0808" stroke-width="1.1"/>
<path d="M268.8 284.5 L308.0 305.4 M282.1 284.5 L319.7 304.6 M295.5 284.5 L335.4 335.5 M308.8 284.5 L338.4 335.5 M322.1 284.5 L343.0 335.5 M335.5 284.5 L351.0 335.5 M348.8 284.5 L359.4 335.5 M362.1 284.5 L364.2 335.5 M375.4 284.5 L371.5 335.5 M388.8 284.5 L375.4 335.5 M402.1 284.5 L388.0 321.5 M415.4 284.5 L394.0 320.5 M428.8 284.5 L401.0 319.5 M442.1 284.5 L407.0 320.5 M341.4 297.5 L346.8 335.5 M346.2 297.5 L351.0 335.5 M349.8 297.5 L354.6 335.5 M353.4 297.5 L357.0 335.5 M320.0 297.0 L333.0 322.0 M425.0 310.6 L409.0 320.0 M272.5 308.9 L300.0 311.6 M272.5 322.3 L285.0 321.0 M272.5 335.7 L285.0 331.4 M272.5 349.1 L307.0 337.4 M272.5 362.5 L330.0 341.0 M272.5 375.9 L336.0 347.0 M272.5 389.3 L300.0 385.4 M272.5 402.7 L285.0 400.0 M272.5 416.1 L300.0 404.0 M272.5 429.5 L305.0 409.0 M272.5 375.5 L353.0 348.6 M285.0 352.0 L305.0 343.4 M285.0 361.4 L330.0 345.0 M286.0 366.6 L328.0 352.0 M286.0 397.0 L318.0 392.0 M290.0 408.0 L318.0 404.0 M440.6 308.9 L409.0 321.5 M440.6 322.3 L426.0 326.0 M440.6 335.7 L405.0 336.0 M440.6 349.1 L420.0 343.4 M440.6 362.5 L419.0 349.0 M440.6 375.9 L405.6 352.0 M440.6 389.3 L405.6 358.0 M440.6 402.7 L405.6 362.0 M440.6 416.1 L405.6 366.0 M440.6 429.5 L412.0 417.0 M405.7 338.0 L440.6 335.4 M418.0 352.0 L407.0 348.0 M416.0 356.0 L407.0 351.0 M405.7 345.0 L425.0 351.6 M405.7 370.0 L431.0 404.0 M405.7 374.0 L426.0 412.0 M268.8 453.0 L313.0 417.0 M295.5 453.0 L320.0 417.0 M322.1 453.0 L328.5 417.0 M335.5 453.0 L332.8 417.0 M348.8 453.0 L337.7 417.0 M362.1 453.0 L343.0 417.0 M375.4 453.0 L352.0 417.0 M388.8 453.0 L362.0 417.0 M402.1 453.0 L372.0 417.0 M415.4 453.0 L382.0 417.0 M428.8 453.0 L392.0 417.0 M442.1 453.0 L400.0 417.0 M313.0 438.0 L324.0 417.0 M319.0 438.0 L329.0 417.0 M324.5 438.0 L332.0 417.0 M339.0 438.0 L335.0 417.0 M344.5 438.0 L338.5 417.0 M338.0 417.4 L348.0 439.4 M341.1 417.4 L351.5 439.1 M344.2 417.4 L354.9 438.9 M347.3 417.4 L358.4 438.6 M350.4 417.4 L361.8 438.4 M353.5 417.4 L365.2 438.1 M356.6 417.4 L368.7 437.9 M359.7 417.4 L372.1 437.6 M362.8 417.4 L375.6 437.4 M365.9 417.4 L379.0 437.1 M369.0 417.4 L382.5 436.9 M372.1 417.4 L386.0 436.6 M375.2 417.4 L389.4 436.4 M378.3 417.4 L392.9 436.1 M381.4 417.4 L396.3 435.9 M384.5 417.4 L399.8 435.6 M387.6 417.4 L403.2 435.4 M390.7 417.4 L406.6 435.1 M393.8 417.4 L410.1 434.9 M396.9 417.4 L413.5 434.6 M400.0 417.4 L417.0 434.4 M403.1 417.4 L420.5 434.1 M406.2 417.4 L423.9 433.9 M409.3 417.4 L427.4 433.6 M412.4 417.4 L430.8 433.4 M415.5 417.4 L434.2 433.1 M396.0 417.6 L410.0 433.6 M400.4 417.6 L415.6 431.4 M404.8 417.6 L421.2 429.2 M409.2 417.6 L426.8 427.0 M413.6 417.6 L432.4 424.8 M424.0 389.0 L393.0 404.0 M418.0 416.0 L440.6 429.4" fill="none" stroke="#ff2040" stroke-width="1.0" opacity="0.95"/>
<g font-family="Liberation Sans" font-weight="bold" font-size="12.6" fill="#ff00ff" stroke="#ff00ff" stroke-width="1.3" stroke-linejoin="round">
<rect x="292" y="304.6" width="45.4" height="3.3" rx="1"/><rect x="295" y="302.6" width="5" height="3"/><rect x="330" y="302.6" width="5" height="3"/><rect x="303" y="308" width="3.4" height="5.6"/><text x="284.2" y="322" textLength="41.5" lengthAdjust="spacingAndGlyphs">downbond</text><text x="284.2" y="331.4" textLength="41.5" lengthAdjust="spacingAndGlyphs">downbond</text><text x="284.2" y="337.4" textLength="41.5" lengthAdjust="spacingAndGlyphs">downbond</text><text x="284.2" y="343.4" textLength="41.5" lengthAdjust="spacingAndGlyphs">downbond</text><text x="383" y="326" textLength="41.5" lengthAdjust="spacingAndGlyphs">downbond</text><text x="383" y="329.4" textLength="41.5" lengthAdjust="spacingAndGlyphs">downbond</text><text x="306.8" y="350" textLength="41.5" lengthAdjust="spacingAndGlyphs">downbond</text><text x="331" y="343.4" textLength="40" lengthAdjust="spacingAndGlyphs">downbond</text><text x="347" y="344" textLength="44" lengthAdjust="spacingAndGlyphs">downbond</text><text x="349" y="350.4" textLength="44" lengthAdjust="spacingAndGlyphs">downbond</text><text x="377" y="349.6" textLength="42" lengthAdjust="spacingAndGlyphs">downbond</text><text x="371" y="343" textLength="30" lengthAdjust="spacingAndGlyphs">dnbond</text><rect x="331" y="335.6" width="64" height="3.4" rx="1" opacity="0.9"/><rect x="400" y="322" width="5.6" height="43" opacity="0.92"/><rect x="397.6" y="338" width="3" height="14"/><text x="304" y="359.6" textLength="11.5" lengthAdjust="spacingAndGlyphs">PC</text><text x="299.4" y="376.4" textLength="42.5" lengthAdjust="spacingAndGlyphs">downbond</text><text x="299.4" y="384.6" textLength="42.5" lengthAdjust="spacingAndGlyphs">downbond</text><text x="284.2" y="386.8" textLength="30" lengthAdjust="spacingAndGlyphs">downb</text><text x="284.2" y="396" textLength="41.5" lengthAdjust="spacingAndGlyphs">downbond</text><text x="284.2" y="399.4" textLength="41.5" lengthAdjust="spacingAndGlyphs">downbond</text><text x="284.2" y="405.4" textLength="41.5" lengthAdjust="spacingAndGlyphs">downbond</text><text x="311" y="404.2" textLength="40.5" lengthAdjust="spacingAndGlyphs">downbond</text><text x="330" y="411.4" textLength="41.5" lengthAdjust="spacingAndGlyphs">downbond</text><text x="381.4" y="407.2" textLength="43.4" lengthAdjust="spacingAndGlyphs">downbond</text><text x="381.4" y="409.2" textLength="43.4" lengthAdjust="spacingAndGlyphs">downbond</text><rect x="303" y="411.6" width="115.6" height="4.4" opacity="0.95"/><rect x="386" y="409.6" width="32" height="3"/><rect x="304" y="396" width="3.4" height="16"/></g>
<rect x="307.4" y="306.5" width="98.3" height="109.6" fill="none" stroke="#2a20ff" stroke-width="1.15"/>
<rect x="309.4" y="307.4" width="5.8" height="2.4" fill="#b8f4ff" stroke="#20c8e8" stroke-width="0.7"/>
<rect x="332.8" y="337.6" width="5.8" height="2.4" fill="#b8f4ff" stroke="#20c8e8" stroke-width="0.7"/>
<rect x="324.8" y="349.4" width="5.8" height="2.4" fill="#b8f4ff" stroke="#20c8e8" stroke-width="0.7"/>
<rect x="350.2" y="347.2" width="5.8" height="2.4" fill="#b8f4ff" stroke="#20c8e8" stroke-width="0.7"/>
<rect x="309.8" y="355.8" width="5.8" height="2.4" fill="#b8f4ff" stroke="#20c8e8" stroke-width="0.7"/>
</g></svg>
</body></html>
